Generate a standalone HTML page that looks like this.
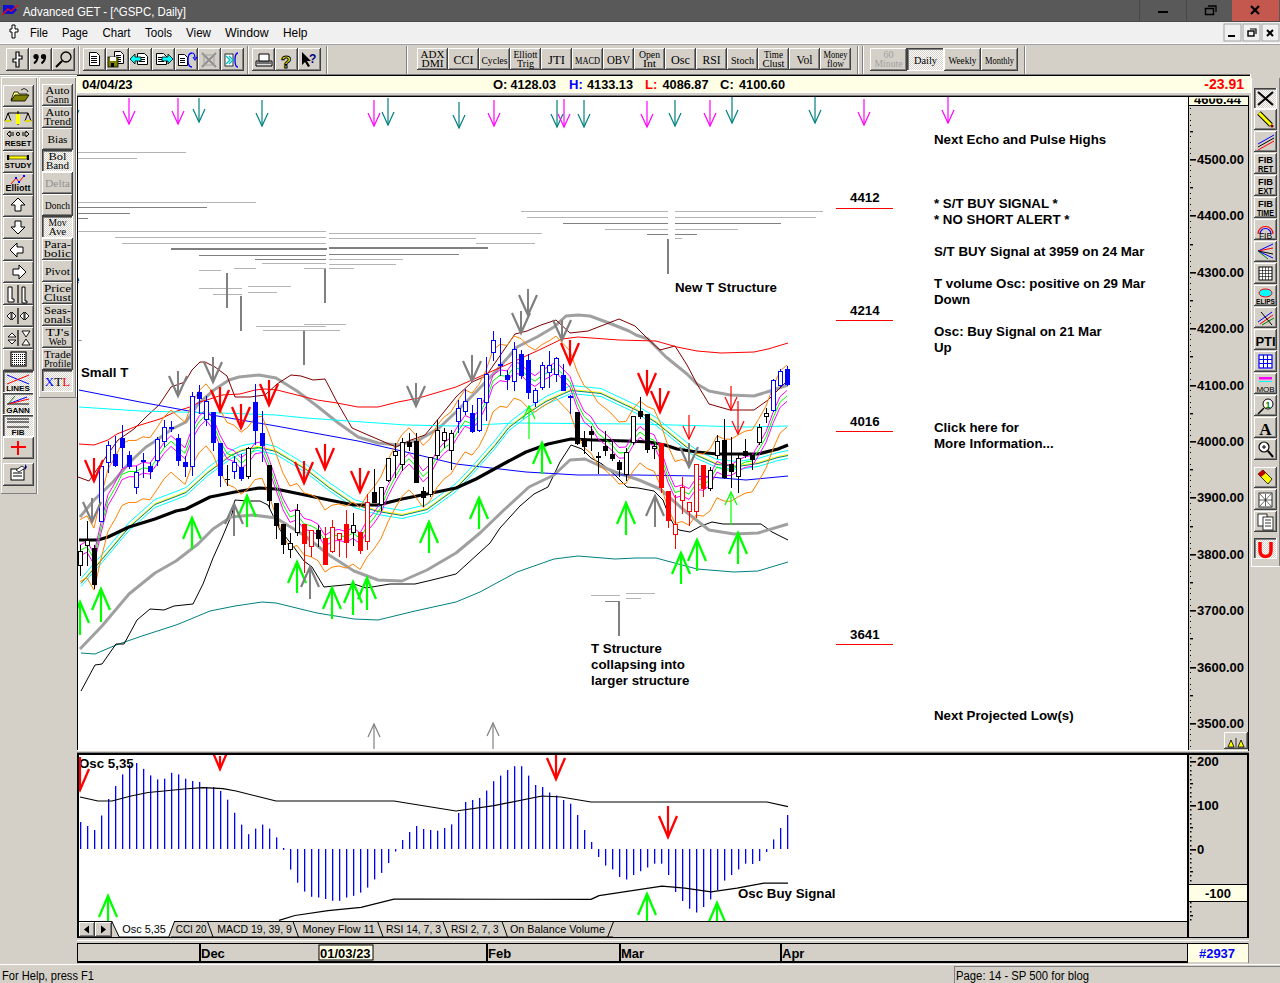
<!DOCTYPE html>
<html><head><meta charset="utf-8"><title>Advanced GET</title>
<style>html,body{margin:0;padding:0;overflow:hidden;background:#d4d0c8} svg{display:block}</style></head>
<body><svg width="1280" height="983" viewBox="0 0 1280 983"><defs>
<pattern id="dith" width="2" height="2" patternUnits="userSpaceOnUse"><rect x="0" y="0" width="1" height="1" fill="#d4d0c8"/><rect x="1" y="1" width="1" height="1" fill="#d4d0c8"/></pattern>
<pattern id="dots" width="2" height="2" patternUnits="userSpaceOnUse"><rect x="0" y="0" width="1" height="1" fill="#000"/></pattern>
<clipPath id="axclip"><rect x="1189" y="98.5" width="59" height="6.5"/></clipPath>
<clipPath id="mainclip"><rect x="78" y="97" width="1110" height="653"/></clipPath>
<clipPath id="oscclip"><rect x="79" y="755" width="1108" height="166"/></clipPath>
</defs>
<rect x="0" y="0" width="1280" height="983" fill="#d4d0c8" /><rect x="0" y="0" width="1280" height="22" fill="#595959" /><rect x="0" y="21" width="1280" height="1" fill="#4a4a4a" /><rect x="1139" y="0" width="1" height="21" fill="#474747" /><rect x="1186" y="0" width="1" height="21" fill="#474747" /><rect x="1232" y="0" width="47" height="21" fill="#c4574e" /><rect x="1158" y="11" width="10" height="2" fill="#000" /><rect x="1205.5" y="8.5" width="8" height="6" fill="none" stroke="#000" stroke-width="1.5"/><path d="M1208 6 H1216 V12" fill="none" stroke="#000" stroke-width="1.3"/><path d="M1251 6 L1259 14 M1259 6 L1251 14" stroke="#000" stroke-width="2.2"/><path d="M3 5 L13 5 L17 10 L13 14 L3 14 Z" fill="#1010d0"/><path d="M2 15 L8 9 L11 11 L18 5" stroke="#e01010" stroke-width="1.4" fill="none"/><text x="23" y="16" font-family="Liberation Sans" font-size="12.5" font-weight="normal" fill="#ffffff" text-anchor="start" textLength="163" lengthAdjust="spacingAndGlyphs">Advanced GET - [^GSPC, Daily]</text><rect x="0" y="22" width="1280" height="21" fill="#f0f0f0" /><rect x="0" y="43" width="1280" height="1" fill="#ffffff" /><rect x="0" y="44" width="1280" height="1" fill="#a0a0a0" /><text x="30" y="37" font-family="Liberation Sans" font-size="12.5" font-weight="normal" fill="#000" text-anchor="start" textLength="18" lengthAdjust="spacingAndGlyphs">File</text><text x="62" y="37" font-family="Liberation Sans" font-size="12.5" font-weight="normal" fill="#000" text-anchor="start" textLength="26" lengthAdjust="spacingAndGlyphs">Page</text><text x="102.5" y="37" font-family="Liberation Sans" font-size="12.5" font-weight="normal" fill="#000" text-anchor="start" textLength="28" lengthAdjust="spacingAndGlyphs">Chart</text><text x="145" y="37" font-family="Liberation Sans" font-size="12.5" font-weight="normal" fill="#000" text-anchor="start" textLength="27" lengthAdjust="spacingAndGlyphs">Tools</text><text x="186" y="37" font-family="Liberation Sans" font-size="12.5" font-weight="normal" fill="#000" text-anchor="start" textLength="25" lengthAdjust="spacingAndGlyphs">View</text><text x="225" y="37" font-family="Liberation Sans" font-size="12.5" font-weight="normal" fill="#000" text-anchor="start" textLength="43.7" lengthAdjust="spacingAndGlyphs">Window</text><text x="283" y="37" font-family="Liberation Sans" font-size="12.5" font-weight="normal" fill="#000" text-anchor="start" textLength="24.5" lengthAdjust="spacingAndGlyphs">Help</text><path d="M12 25 h3 v4 h3 v3 h-3 v6 h-3 v-6 h-2 v-3 h2 z" fill="#fff" stroke="#000" stroke-width="1"/><rect x="1224" y="24" width="17" height="17" fill="#f0f0f0" stroke="#a0a0a0" stroke-width="1"/><rect x="1243" y="24" width="17" height="17" fill="#f0f0f0" stroke="#a0a0a0" stroke-width="1"/><rect x="1262" y="24" width="17" height="17" fill="#f0f0f0" stroke="#a0a0a0" stroke-width="1"/><rect x="1228" y="35" width="7" height="2" fill="#000" /><rect x="1248" y="31" width="6" height="5" fill="none" stroke="#000" stroke-width="1.4"/><path d="M1250 29 H1256 V34" fill="none" stroke="#000" stroke-width="1.2"/><path d="M1267 30 L1273 36 M1273 30 L1267 36" stroke="#000" stroke-width="2"/><rect x="6" y="48" width="23" height="23" fill="#d4d0c8" /><rect x="6" y="48" width="23" height="1" fill="#ffffff" /><rect x="6" y="48" width="1" height="23" fill="#ffffff" /><rect x="6" y="70" width="23" height="1" fill="#404040" /><rect x="28" y="48" width="1" height="23" fill="#404040" /><rect x="7" y="69" width="21" height="1" fill="#808080" /><rect x="27" y="49" width="1" height="21" fill="#808080" /><rect x="29" y="48" width="23" height="23" fill="#d4d0c8" /><rect x="29" y="48" width="23" height="1" fill="#ffffff" /><rect x="29" y="48" width="1" height="23" fill="#ffffff" /><rect x="29" y="70" width="23" height="1" fill="#404040" /><rect x="51" y="48" width="1" height="23" fill="#404040" /><rect x="30" y="69" width="21" height="1" fill="#808080" /><rect x="50" y="49" width="1" height="21" fill="#808080" /><rect x="52" y="48" width="23" height="23" fill="#d4d0c8" /><rect x="52" y="48" width="23" height="1" fill="#ffffff" /><rect x="52" y="48" width="1" height="23" fill="#ffffff" /><rect x="52" y="70" width="23" height="1" fill="#404040" /><rect x="74" y="48" width="1" height="23" fill="#404040" /><rect x="53" y="69" width="21" height="1" fill="#808080" /><rect x="73" y="49" width="1" height="21" fill="#808080" /><rect x="83" y="48" width="23" height="23" fill="#d4d0c8" /><rect x="83" y="48" width="23" height="1" fill="#ffffff" /><rect x="83" y="48" width="1" height="23" fill="#ffffff" /><rect x="83" y="70" width="23" height="1" fill="#404040" /><rect x="105" y="48" width="1" height="23" fill="#404040" /><rect x="84" y="69" width="21" height="1" fill="#808080" /><rect x="104" y="49" width="1" height="21" fill="#808080" /><rect x="106" y="48" width="23" height="23" fill="#d4d0c8" /><rect x="106" y="48" width="23" height="1" fill="#ffffff" /><rect x="106" y="48" width="1" height="23" fill="#ffffff" /><rect x="106" y="70" width="23" height="1" fill="#404040" /><rect x="128" y="48" width="1" height="23" fill="#404040" /><rect x="107" y="69" width="21" height="1" fill="#808080" /><rect x="127" y="49" width="1" height="21" fill="#808080" /><rect x="129" y="48" width="23" height="23" fill="#d4d0c8" /><rect x="129" y="48" width="23" height="1" fill="#ffffff" /><rect x="129" y="48" width="1" height="23" fill="#ffffff" /><rect x="129" y="70" width="23" height="1" fill="#404040" /><rect x="151" y="48" width="1" height="23" fill="#404040" /><rect x="130" y="69" width="21" height="1" fill="#808080" /><rect x="150" y="49" width="1" height="21" fill="#808080" /><rect x="152" y="48" width="23" height="23" fill="#d4d0c8" /><rect x="152" y="48" width="23" height="1" fill="#ffffff" /><rect x="152" y="48" width="1" height="23" fill="#ffffff" /><rect x="152" y="70" width="23" height="1" fill="#404040" /><rect x="174" y="48" width="1" height="23" fill="#404040" /><rect x="153" y="69" width="21" height="1" fill="#808080" /><rect x="173" y="49" width="1" height="21" fill="#808080" /><rect x="175" y="48" width="23" height="23" fill="#d4d0c8" /><rect x="175" y="48" width="23" height="1" fill="#ffffff" /><rect x="175" y="48" width="1" height="23" fill="#ffffff" /><rect x="175" y="70" width="23" height="1" fill="#404040" /><rect x="197" y="48" width="1" height="23" fill="#404040" /><rect x="176" y="69" width="21" height="1" fill="#808080" /><rect x="196" y="49" width="1" height="21" fill="#808080" /><rect x="198" y="48" width="23" height="23" fill="#d4d0c8" /><rect x="198" y="48" width="23" height="1" fill="#ffffff" /><rect x="198" y="48" width="1" height="23" fill="#ffffff" /><rect x="198" y="70" width="23" height="1" fill="#404040" /><rect x="220" y="48" width="1" height="23" fill="#404040" /><rect x="199" y="69" width="21" height="1" fill="#808080" /><rect x="219" y="49" width="1" height="21" fill="#808080" /><rect x="221" y="48" width="23" height="23" fill="#d4d0c8" /><rect x="221" y="48" width="23" height="1" fill="#ffffff" /><rect x="221" y="48" width="1" height="23" fill="#ffffff" /><rect x="221" y="70" width="23" height="1" fill="#404040" /><rect x="243" y="48" width="1" height="23" fill="#404040" /><rect x="222" y="69" width="21" height="1" fill="#808080" /><rect x="242" y="49" width="1" height="21" fill="#808080" /><rect x="252" y="48" width="23" height="23" fill="#d4d0c8" /><rect x="252" y="48" width="23" height="1" fill="#ffffff" /><rect x="252" y="48" width="1" height="23" fill="#ffffff" /><rect x="252" y="70" width="23" height="1" fill="#404040" /><rect x="274" y="48" width="1" height="23" fill="#404040" /><rect x="253" y="69" width="21" height="1" fill="#808080" /><rect x="273" y="49" width="1" height="21" fill="#808080" /><rect x="275" y="48" width="23" height="23" fill="#d4d0c8" /><rect x="275" y="48" width="23" height="1" fill="#ffffff" /><rect x="275" y="48" width="1" height="23" fill="#ffffff" /><rect x="275" y="70" width="23" height="1" fill="#404040" /><rect x="297" y="48" width="1" height="23" fill="#404040" /><rect x="276" y="69" width="21" height="1" fill="#808080" /><rect x="296" y="49" width="1" height="21" fill="#808080" /><rect x="298" y="48" width="23" height="23" fill="#d4d0c8" /><rect x="298" y="48" width="23" height="1" fill="#ffffff" /><rect x="298" y="48" width="1" height="23" fill="#ffffff" /><rect x="298" y="70" width="23" height="1" fill="#404040" /><rect x="320" y="48" width="1" height="23" fill="#404040" /><rect x="299" y="69" width="21" height="1" fill="#808080" /><rect x="319" y="49" width="1" height="21" fill="#808080" /><rect x="78" y="46" width="1" height="28" fill="#808080" /><rect x="79" y="46" width="1" height="28" fill="#ffffff" /><rect x="247" y="46" width="1" height="28" fill="#808080" /><rect x="248" y="46" width="1" height="28" fill="#ffffff" /><rect x="326" y="46" width="1" height="28" fill="#808080" /><rect x="327" y="46" width="1" height="28" fill="#ffffff" /><rect x="406" y="46" width="1" height="28" fill="#808080" /><rect x="407" y="46" width="1" height="28" fill="#ffffff" /><rect x="857" y="46" width="1" height="28" fill="#808080" /><rect x="858" y="46" width="1" height="28" fill="#ffffff" /><rect x="862" y="46" width="1" height="28" fill="#808080" /><rect x="863" y="46" width="1" height="28" fill="#ffffff" /><rect x="1024" y="46" width="1" height="28" fill="#808080" /><rect x="1025" y="46" width="1" height="28" fill="#ffffff" /><path d="M16 52 h3 v4 h3 v3 h-3 v8 h-3 v-5 h-3 v-3 h3 z" fill="#fff" stroke="#000" stroke-width="1.2"/><circle cx="36" cy="56.5" r="2.6" fill="#000"/><path d="M37.5 57 q0 4 -3.5 6.5" fill="none" stroke="#000" stroke-width="2"/><circle cx="43.5" cy="56.5" r="2.6" fill="#000"/><path d="M45 57 q0 4 -3.5 6.5" fill="none" stroke="#000" stroke-width="2"/><circle cx="66" cy="57" r="5" fill="none" stroke="#000" stroke-width="1.3"/><line x1="62" y1="61" x2="56" y2="67" stroke="#000" stroke-width="2"/><path d="M89.5 52.5 h7 l3 3 v10 h-10 z" fill="#fff" stroke="#000" stroke-width="1"/><rect x="91.0" y="56.0" width="6" height="1" fill="#000"/><rect x="91.0" y="58.0" width="6" height="1" fill="#000"/><rect x="91.0" y="60.0" width="6" height="1" fill="#000"/><rect x="91.0" y="62.0" width="6" height="1" fill="#000"/><path d="M114.5 51.5 h6 l3 3 v9 h-9 z" fill="#fff" stroke="#000" stroke-width="1"/><rect x="116.0" y="55.0" width="5" height="1" fill="#000"/><rect x="116.0" y="57.0" width="5" height="1" fill="#000"/><rect x="116.0" y="59.0" width="5" height="1" fill="#000"/><rect x="116.0" y="61.0" width="5" height="1" fill="#000"/><rect x="108" y="57" width="10" height="10" fill="#808000" stroke="#000" stroke-width="0.8"/><rect x="110" y="57" width="6" height="4" fill="#fff"/><rect x="111" y="63" width="3" height="4" fill="#000"/><path d="M137.5 53.5 h7 l3 3 v8 h-10 z" fill="#fff" stroke="#000" stroke-width="1"/><rect x="139.0" y="57.0" width="6" height="1" fill="#000"/><rect x="139.0" y="59.0" width="6" height="1" fill="#000"/><rect x="139.0" y="61.0" width="6" height="1" fill="#000"/><path d="M130 59 l5 -5 v3 h6 v4 h-6 v3 z" fill="#00ffff" stroke="#000" stroke-width="0.8"/><path d="M156.5 53.5 h7 l3 3 v8 h-10 z" fill="#fff" stroke="#000" stroke-width="1"/><rect x="158.0" y="57.0" width="6" height="1" fill="#000"/><rect x="158.0" y="59.0" width="6" height="1" fill="#000"/><rect x="158.0" y="61.0" width="6" height="1" fill="#000"/><path d="M173 59 l-5 -5 v3 h-6 v4 h6 v3 z" fill="#00ffff" stroke="#000" stroke-width="0.8"/><path d="M178.5 54.5 h6 l3 3 v8 h-9 z" fill="#fff" stroke="#000" stroke-width="1"/><rect x="180.0" y="58.0" width="5" height="1" fill="#000"/><rect x="180.0" y="60.0" width="5" height="1" fill="#000"/><rect x="180.0" y="62.0" width="5" height="1" fill="#000"/><path d="M192 53 q-4 0 -4 7 q0 7 4 7" fill="none" stroke="#0000ff" stroke-width="1.3"/><path d="M192 53 q3 0 3 5 M193 57 l2 3 l2 -3" fill="none" stroke="#0000ff" stroke-width="1.2"/><path d="M202 53 L216 67 M216 53 L202 67" stroke="#909090" stroke-width="2"/><rect x="204" y="55" width="10" height="10" fill="none" stroke="#a0a0a0"/><rect x="225" y="54" width="8" height="12" fill="#fff" stroke="#000" stroke-width="0.8"/><path d="M226 56 l4 4 l-4 4 M229 56 l4 4 l-4 4" fill="none" stroke="#00c0c0" stroke-width="1.4"/><path d="M238 53 q-3 0 -3 7 q0 7 3 7" fill="none" stroke="#0000ff" stroke-width="1.3"/><path d="M256 61 h16 v5 h-16 z" fill="#e0e0e0" stroke="#000" stroke-width="1"/><path d="M259 54 h10 v7 h-10 z" fill="#fff" stroke="#000" stroke-width="1"/><line x1="257" y1="63" x2="271" y2="63" stroke="#000"/><text x="281" y="68" font-family="Liberation Sans" font-size="17" font-weight="bold" fill="#ffff00" text-anchor="start" stroke="#000" stroke-width="1">?</text><path d="M302 52 v13 l3 -3 l3 5 l2 -1 l-3 -5 h4 z" fill="#000"/><text x="309" y="63" font-family="Liberation Sans" font-size="12" font-weight="bold" fill="#000080" text-anchor="start" >?</text><rect x="417" y="48" width="31" height="22" fill="#d4d0c8" /><rect x="417" y="48" width="31" height="1" fill="#ffffff" /><rect x="417" y="48" width="1" height="22" fill="#ffffff" /><rect x="417" y="69" width="31" height="1" fill="#404040" /><rect x="447" y="48" width="1" height="22" fill="#404040" /><rect x="418" y="68" width="29" height="1" fill="#808080" /><rect x="446" y="49" width="1" height="20" fill="#808080" /><text x="432.5" y="58" font-family="Liberation Serif" font-size="10" font-weight="normal" fill="#000" text-anchor="middle" textLength="24" lengthAdjust="spacingAndGlyphs">ADX</text><text x="432.5" y="67" font-family="Liberation Serif" font-size="10" font-weight="normal" fill="#000" text-anchor="middle" textLength="22" lengthAdjust="spacingAndGlyphs">DMI</text><rect x="448" y="48" width="31" height="22" fill="#d4d0c8" /><rect x="448" y="48" width="31" height="1" fill="#ffffff" /><rect x="448" y="48" width="1" height="22" fill="#ffffff" /><rect x="448" y="69" width="31" height="1" fill="#404040" /><rect x="478" y="48" width="1" height="22" fill="#404040" /><rect x="449" y="68" width="29" height="1" fill="#808080" /><rect x="477" y="49" width="1" height="20" fill="#808080" /><text x="463.5" y="64" font-family="Liberation Serif" font-size="13" font-weight="normal" fill="#000" text-anchor="middle" textLength="20" lengthAdjust="spacingAndGlyphs">CCI</text><rect x="479" y="48" width="31" height="22" fill="#d4d0c8" /><rect x="479" y="48" width="31" height="1" fill="#ffffff" /><rect x="479" y="48" width="1" height="22" fill="#ffffff" /><rect x="479" y="69" width="31" height="1" fill="#404040" /><rect x="509" y="48" width="1" height="22" fill="#404040" /><rect x="480" y="68" width="29" height="1" fill="#808080" /><rect x="508" y="49" width="1" height="20" fill="#808080" /><text x="494.5" y="64" font-family="Liberation Serif" font-size="11" font-weight="normal" fill="#000" text-anchor="middle" textLength="26" lengthAdjust="spacingAndGlyphs">Cycles</text><rect x="510" y="48" width="31" height="22" fill="#d4d0c8" /><rect x="510" y="48" width="31" height="1" fill="#ffffff" /><rect x="510" y="48" width="1" height="22" fill="#ffffff" /><rect x="510" y="69" width="31" height="1" fill="#404040" /><rect x="540" y="48" width="1" height="22" fill="#404040" /><rect x="511" y="68" width="29" height="1" fill="#808080" /><rect x="539" y="49" width="1" height="20" fill="#808080" /><text x="525.5" y="58" font-family="Liberation Serif" font-size="10" font-weight="normal" fill="#000" text-anchor="middle" textLength="24" lengthAdjust="spacingAndGlyphs">Elliott</text><text x="525.5" y="67" font-family="Liberation Serif" font-size="10" font-weight="normal" fill="#000" text-anchor="middle" textLength="17" lengthAdjust="spacingAndGlyphs">Trig</text><rect x="541" y="48" width="31" height="22" fill="#d4d0c8" /><rect x="541" y="48" width="31" height="1" fill="#ffffff" /><rect x="541" y="48" width="1" height="22" fill="#ffffff" /><rect x="541" y="69" width="31" height="1" fill="#404040" /><rect x="571" y="48" width="1" height="22" fill="#404040" /><rect x="542" y="68" width="29" height="1" fill="#808080" /><rect x="570" y="49" width="1" height="20" fill="#808080" /><text x="556.5" y="64" font-family="Liberation Serif" font-size="13" font-weight="normal" fill="#000" text-anchor="middle" textLength="17" lengthAdjust="spacingAndGlyphs">JTI</text><rect x="572" y="48" width="31" height="22" fill="#d4d0c8" /><rect x="572" y="48" width="31" height="1" fill="#ffffff" /><rect x="572" y="48" width="1" height="22" fill="#ffffff" /><rect x="572" y="69" width="31" height="1" fill="#404040" /><rect x="602" y="48" width="1" height="22" fill="#404040" /><rect x="573" y="68" width="29" height="1" fill="#808080" /><rect x="601" y="49" width="1" height="20" fill="#808080" /><text x="587.5" y="64" font-family="Liberation Serif" font-size="11" font-weight="normal" fill="#000" text-anchor="middle" textLength="25" lengthAdjust="spacingAndGlyphs">MACD</text><rect x="603" y="48" width="31" height="22" fill="#d4d0c8" /><rect x="603" y="48" width="31" height="1" fill="#ffffff" /><rect x="603" y="48" width="1" height="22" fill="#ffffff" /><rect x="603" y="69" width="31" height="1" fill="#404040" /><rect x="633" y="48" width="1" height="22" fill="#404040" /><rect x="604" y="68" width="29" height="1" fill="#808080" /><rect x="632" y="49" width="1" height="20" fill="#808080" /><text x="618.5" y="64" font-family="Liberation Serif" font-size="13" font-weight="normal" fill="#000" text-anchor="middle" textLength="23" lengthAdjust="spacingAndGlyphs">OBV</text><rect x="634" y="48" width="31" height="22" fill="#d4d0c8" /><rect x="634" y="48" width="31" height="1" fill="#ffffff" /><rect x="634" y="48" width="1" height="22" fill="#ffffff" /><rect x="634" y="69" width="31" height="1" fill="#404040" /><rect x="664" y="48" width="1" height="22" fill="#404040" /><rect x="635" y="68" width="29" height="1" fill="#808080" /><rect x="663" y="49" width="1" height="20" fill="#808080" /><text x="649.5" y="58" font-family="Liberation Serif" font-size="10" font-weight="normal" fill="#000" text-anchor="middle" textLength="21" lengthAdjust="spacingAndGlyphs">Open</text><text x="649.5" y="67" font-family="Liberation Serif" font-size="10" font-weight="normal" fill="#000" text-anchor="middle" textLength="13" lengthAdjust="spacingAndGlyphs">Int</text><rect x="665" y="48" width="31" height="22" fill="#d4d0c8" /><rect x="665" y="48" width="31" height="1" fill="#ffffff" /><rect x="665" y="48" width="1" height="22" fill="#ffffff" /><rect x="665" y="69" width="31" height="1" fill="#404040" /><rect x="695" y="48" width="1" height="22" fill="#404040" /><rect x="666" y="68" width="29" height="1" fill="#808080" /><rect x="694" y="49" width="1" height="20" fill="#808080" /><text x="680.5" y="64" font-family="Liberation Serif" font-size="13" font-weight="normal" fill="#000" text-anchor="middle" textLength="19" lengthAdjust="spacingAndGlyphs">Osc</text><rect x="696" y="48" width="31" height="22" fill="#d4d0c8" /><rect x="696" y="48" width="31" height="1" fill="#ffffff" /><rect x="696" y="48" width="1" height="22" fill="#ffffff" /><rect x="696" y="69" width="31" height="1" fill="#404040" /><rect x="726" y="48" width="1" height="22" fill="#404040" /><rect x="697" y="68" width="29" height="1" fill="#808080" /><rect x="725" y="49" width="1" height="20" fill="#808080" /><text x="711.5" y="64" font-family="Liberation Serif" font-size="13" font-weight="normal" fill="#000" text-anchor="middle" textLength="18" lengthAdjust="spacingAndGlyphs">RSI</text><rect x="727" y="48" width="31" height="22" fill="#d4d0c8" /><rect x="727" y="48" width="31" height="1" fill="#ffffff" /><rect x="727" y="48" width="1" height="22" fill="#ffffff" /><rect x="727" y="69" width="31" height="1" fill="#404040" /><rect x="757" y="48" width="1" height="22" fill="#404040" /><rect x="728" y="68" width="29" height="1" fill="#808080" /><rect x="756" y="49" width="1" height="20" fill="#808080" /><text x="742.5" y="64" font-family="Liberation Serif" font-size="11" font-weight="normal" fill="#000" text-anchor="middle" textLength="23" lengthAdjust="spacingAndGlyphs">Stoch</text><rect x="758" y="48" width="31" height="22" fill="#d4d0c8" /><rect x="758" y="48" width="31" height="1" fill="#ffffff" /><rect x="758" y="48" width="1" height="22" fill="#ffffff" /><rect x="758" y="69" width="31" height="1" fill="#404040" /><rect x="788" y="48" width="1" height="22" fill="#404040" /><rect x="759" y="68" width="29" height="1" fill="#808080" /><rect x="787" y="49" width="1" height="20" fill="#808080" /><text x="773.5" y="58" font-family="Liberation Serif" font-size="10" font-weight="normal" fill="#000" text-anchor="middle" textLength="19" lengthAdjust="spacingAndGlyphs">Time</text><text x="773.5" y="67" font-family="Liberation Serif" font-size="10" font-weight="normal" fill="#000" text-anchor="middle" textLength="22" lengthAdjust="spacingAndGlyphs">Clust</text><rect x="789" y="48" width="31" height="22" fill="#d4d0c8" /><rect x="789" y="48" width="31" height="1" fill="#ffffff" /><rect x="789" y="48" width="1" height="22" fill="#ffffff" /><rect x="789" y="69" width="31" height="1" fill="#404040" /><rect x="819" y="48" width="1" height="22" fill="#404040" /><rect x="790" y="68" width="29" height="1" fill="#808080" /><rect x="818" y="49" width="1" height="20" fill="#808080" /><text x="804.5" y="64" font-family="Liberation Serif" font-size="13" font-weight="normal" fill="#000" text-anchor="middle" textLength="16" lengthAdjust="spacingAndGlyphs">Vol</text><rect x="820" y="48" width="31" height="22" fill="#d4d0c8" /><rect x="820" y="48" width="31" height="1" fill="#ffffff" /><rect x="820" y="48" width="1" height="22" fill="#ffffff" /><rect x="820" y="69" width="31" height="1" fill="#404040" /><rect x="850" y="48" width="1" height="22" fill="#404040" /><rect x="821" y="68" width="29" height="1" fill="#808080" /><rect x="849" y="49" width="1" height="20" fill="#808080" /><text x="835.5" y="58" font-family="Liberation Serif" font-size="10" font-weight="normal" fill="#000" text-anchor="middle" textLength="24" lengthAdjust="spacingAndGlyphs">Money</text><text x="835.5" y="67" font-family="Liberation Serif" font-size="10" font-weight="normal" fill="#000" text-anchor="middle" textLength="17" lengthAdjust="spacingAndGlyphs">flow</text><rect x="870" y="48" width="37" height="23" fill="#d4d0c8" /><rect x="870" y="48" width="37" height="1" fill="#ffffff" /><rect x="870" y="48" width="1" height="23" fill="#ffffff" /><rect x="870" y="70" width="37" height="1" fill="#404040" /><rect x="906" y="48" width="1" height="23" fill="#404040" /><rect x="871" y="69" width="35" height="1" fill="#808080" /><rect x="905" y="49" width="1" height="21" fill="#808080" /><text x="888.5" y="58" font-family="Liberation Serif" font-size="10" font-weight="normal" fill="#a0a0a0" text-anchor="middle" >60</text><text x="888.5" y="67" font-family="Liberation Serif" font-size="10" font-weight="normal" fill="#a0a0a0" text-anchor="middle" textLength="28" lengthAdjust="spacingAndGlyphs">Minute</text><rect x="907" y="48" width="37" height="23" fill="#ffffff" /><rect x="907" y="48" width="37" height="23" fill="url(#dith)" /><rect x="907" y="48" width="37" height="1" fill="#404040" /><rect x="907" y="48" width="1" height="23" fill="#404040" /><rect x="908" y="49" width="35" height="1" fill="#808080" /><rect x="908" y="49" width="1" height="21" fill="#808080" /><rect x="907" y="70" width="37" height="1" fill="#ffffff" /><rect x="943" y="48" width="1" height="23" fill="#ffffff" /><text x="925.5" y="64" font-family="Liberation Serif" font-size="11" font-weight="normal" fill="#000" text-anchor="middle" textLength="23" lengthAdjust="spacingAndGlyphs">Daily</text><rect x="944" y="48" width="37" height="23" fill="#d4d0c8" /><rect x="944" y="48" width="37" height="1" fill="#ffffff" /><rect x="944" y="48" width="1" height="23" fill="#ffffff" /><rect x="944" y="70" width="37" height="1" fill="#404040" /><rect x="980" y="48" width="1" height="23" fill="#404040" /><rect x="945" y="69" width="35" height="1" fill="#808080" /><rect x="979" y="49" width="1" height="21" fill="#808080" /><text x="962.5" y="64" font-family="Liberation Serif" font-size="11" font-weight="normal" fill="#000" text-anchor="middle" textLength="28" lengthAdjust="spacingAndGlyphs">Weekly</text><rect x="981" y="48" width="37" height="23" fill="#d4d0c8" /><rect x="981" y="48" width="37" height="1" fill="#ffffff" /><rect x="981" y="48" width="1" height="23" fill="#ffffff" /><rect x="981" y="70" width="37" height="1" fill="#404040" /><rect x="1017" y="48" width="1" height="23" fill="#404040" /><rect x="982" y="69" width="35" height="1" fill="#808080" /><rect x="1016" y="49" width="1" height="21" fill="#808080" /><text x="999.5" y="64" font-family="Liberation Serif" font-size="10" font-weight="normal" fill="#000" text-anchor="middle" textLength="29" lengthAdjust="spacingAndGlyphs">Monthly</text><rect x="0" y="74" width="77" height="1" fill="#808080" /><rect x="0" y="75" width="77" height="1" fill="#ffffff" /><rect x="1" y="77" width="1" height="416" fill="#ffffff" /><rect x="36" y="77" width="1" height="416" fill="#808080" /><rect x="1" y="77" width="36" height="1" fill="#ffffff" /><rect x="1" y="493" width="36" height="1" fill="#808080" /><rect x="37" y="77" width="1" height="417" fill="#ffffff" /><rect x="39" y="77" width="1" height="321" fill="#ffffff" /><rect x="75" y="77" width="1" height="321" fill="#808080" /><rect x="39" y="77" width="37" height="1" fill="#ffffff" /><rect x="39" y="397" width="37" height="1" fill="#808080" /><rect x="76" y="77" width="1" height="320" fill="#ffffff" /><rect x="3" y="85" width="31" height="22" fill="#d4d0c8" /><rect x="3" y="85" width="31" height="1" fill="#ffffff" /><rect x="3" y="85" width="1" height="22" fill="#ffffff" /><rect x="3" y="106" width="31" height="1" fill="#404040" /><rect x="33" y="85" width="1" height="22" fill="#404040" /><rect x="4" y="105" width="29" height="1" fill="#808080" /><rect x="32" y="86" width="1" height="20" fill="#808080" /><rect x="3" y="107" width="31" height="22" fill="#d4d0c8" /><rect x="3" y="107" width="31" height="1" fill="#ffffff" /><rect x="3" y="107" width="1" height="22" fill="#ffffff" /><rect x="3" y="128" width="31" height="1" fill="#404040" /><rect x="33" y="107" width="1" height="22" fill="#404040" /><rect x="4" y="127" width="29" height="1" fill="#808080" /><rect x="32" y="108" width="1" height="20" fill="#808080" /><rect x="3" y="129" width="31" height="22" fill="#d4d0c8" /><rect x="3" y="129" width="31" height="1" fill="#ffffff" /><rect x="3" y="129" width="1" height="22" fill="#ffffff" /><rect x="3" y="150" width="31" height="1" fill="#404040" /><rect x="33" y="129" width="1" height="22" fill="#404040" /><rect x="4" y="149" width="29" height="1" fill="#808080" /><rect x="32" y="130" width="1" height="20" fill="#808080" /><rect x="3" y="151" width="31" height="22" fill="#d4d0c8" /><rect x="3" y="151" width="31" height="1" fill="#ffffff" /><rect x="3" y="151" width="1" height="22" fill="#ffffff" /><rect x="3" y="172" width="31" height="1" fill="#404040" /><rect x="33" y="151" width="1" height="22" fill="#404040" /><rect x="4" y="171" width="29" height="1" fill="#808080" /><rect x="32" y="152" width="1" height="20" fill="#808080" /><rect x="3" y="173" width="31" height="22" fill="#d4d0c8" /><rect x="3" y="173" width="31" height="1" fill="#ffffff" /><rect x="3" y="173" width="1" height="22" fill="#ffffff" /><rect x="3" y="194" width="31" height="1" fill="#404040" /><rect x="33" y="173" width="1" height="22" fill="#404040" /><rect x="4" y="193" width="29" height="1" fill="#808080" /><rect x="32" y="174" width="1" height="20" fill="#808080" /><rect x="3" y="195" width="31" height="22" fill="#d4d0c8" /><rect x="3" y="195" width="31" height="1" fill="#ffffff" /><rect x="3" y="195" width="1" height="22" fill="#ffffff" /><rect x="3" y="216" width="31" height="1" fill="#404040" /><rect x="33" y="195" width="1" height="22" fill="#404040" /><rect x="4" y="215" width="29" height="1" fill="#808080" /><rect x="32" y="196" width="1" height="20" fill="#808080" /><rect x="3" y="217" width="31" height="22" fill="#d4d0c8" /><rect x="3" y="217" width="31" height="1" fill="#ffffff" /><rect x="3" y="217" width="1" height="22" fill="#ffffff" /><rect x="3" y="238" width="31" height="1" fill="#404040" /><rect x="33" y="217" width="1" height="22" fill="#404040" /><rect x="4" y="237" width="29" height="1" fill="#808080" /><rect x="32" y="218" width="1" height="20" fill="#808080" /><rect x="3" y="239" width="31" height="22" fill="#d4d0c8" /><rect x="3" y="239" width="31" height="1" fill="#ffffff" /><rect x="3" y="239" width="1" height="22" fill="#ffffff" /><rect x="3" y="260" width="31" height="1" fill="#404040" /><rect x="33" y="239" width="1" height="22" fill="#404040" /><rect x="4" y="259" width="29" height="1" fill="#808080" /><rect x="32" y="240" width="1" height="20" fill="#808080" /><rect x="3" y="261" width="31" height="22" fill="#d4d0c8" /><rect x="3" y="261" width="31" height="1" fill="#ffffff" /><rect x="3" y="261" width="1" height="22" fill="#ffffff" /><rect x="3" y="282" width="31" height="1" fill="#404040" /><rect x="33" y="261" width="1" height="22" fill="#404040" /><rect x="4" y="281" width="29" height="1" fill="#808080" /><rect x="32" y="262" width="1" height="20" fill="#808080" /><rect x="3" y="283" width="31" height="22" fill="#d4d0c8" /><rect x="3" y="283" width="31" height="1" fill="#ffffff" /><rect x="3" y="283" width="1" height="22" fill="#ffffff" /><rect x="3" y="304" width="31" height="1" fill="#404040" /><rect x="33" y="283" width="1" height="22" fill="#404040" /><rect x="4" y="303" width="29" height="1" fill="#808080" /><rect x="32" y="284" width="1" height="20" fill="#808080" /><rect x="3" y="305" width="31" height="22" fill="#d4d0c8" /><rect x="3" y="305" width="31" height="1" fill="#ffffff" /><rect x="3" y="305" width="1" height="22" fill="#ffffff" /><rect x="3" y="326" width="31" height="1" fill="#404040" /><rect x="33" y="305" width="1" height="22" fill="#404040" /><rect x="4" y="325" width="29" height="1" fill="#808080" /><rect x="32" y="306" width="1" height="20" fill="#808080" /><rect x="3" y="327" width="31" height="22" fill="#d4d0c8" /><rect x="3" y="327" width="31" height="1" fill="#ffffff" /><rect x="3" y="327" width="1" height="22" fill="#ffffff" /><rect x="3" y="348" width="31" height="1" fill="#404040" /><rect x="33" y="327" width="1" height="22" fill="#404040" /><rect x="4" y="347" width="29" height="1" fill="#808080" /><rect x="32" y="328" width="1" height="20" fill="#808080" /><rect x="3" y="349" width="31" height="22" fill="#d4d0c8" /><rect x="3" y="349" width="31" height="1" fill="#ffffff" /><rect x="3" y="349" width="1" height="22" fill="#ffffff" /><rect x="3" y="370" width="31" height="1" fill="#404040" /><rect x="33" y="349" width="1" height="22" fill="#404040" /><rect x="4" y="369" width="29" height="1" fill="#808080" /><rect x="32" y="350" width="1" height="20" fill="#808080" /><rect x="3" y="371" width="31" height="22" fill="#ffffff" /><rect x="3" y="371" width="31" height="22" fill="url(#dith)" /><rect x="3" y="371" width="31" height="1" fill="#404040" /><rect x="3" y="371" width="1" height="22" fill="#404040" /><rect x="4" y="372" width="29" height="1" fill="#808080" /><rect x="4" y="372" width="1" height="20" fill="#808080" /><rect x="3" y="392" width="31" height="1" fill="#ffffff" /><rect x="33" y="371" width="1" height="22" fill="#ffffff" /><rect x="3" y="393" width="31" height="22" fill="#ffffff" /><rect x="3" y="393" width="31" height="22" fill="url(#dith)" /><rect x="3" y="393" width="31" height="1" fill="#404040" /><rect x="3" y="393" width="1" height="22" fill="#404040" /><rect x="4" y="394" width="29" height="1" fill="#808080" /><rect x="4" y="394" width="1" height="20" fill="#808080" /><rect x="3" y="414" width="31" height="1" fill="#ffffff" /><rect x="33" y="393" width="1" height="22" fill="#ffffff" /><rect x="3" y="415" width="31" height="22" fill="#ffffff" /><rect x="3" y="415" width="31" height="22" fill="url(#dith)" /><rect x="3" y="415" width="31" height="1" fill="#404040" /><rect x="3" y="415" width="1" height="22" fill="#404040" /><rect x="4" y="416" width="29" height="1" fill="#808080" /><rect x="4" y="416" width="1" height="20" fill="#808080" /><rect x="3" y="436" width="31" height="1" fill="#ffffff" /><rect x="33" y="415" width="1" height="22" fill="#ffffff" /><rect x="3" y="437" width="31" height="22" fill="#d4d0c8" /><rect x="3" y="437" width="31" height="1" fill="#ffffff" /><rect x="3" y="437" width="1" height="22" fill="#ffffff" /><rect x="3" y="458" width="31" height="1" fill="#404040" /><rect x="33" y="437" width="1" height="22" fill="#404040" /><rect x="4" y="457" width="29" height="1" fill="#808080" /><rect x="32" y="438" width="1" height="20" fill="#808080" /><rect x="3" y="463" width="31" height="23" fill="#d4d0c8" /><rect x="3" y="463" width="31" height="1" fill="#ffffff" /><rect x="3" y="463" width="1" height="23" fill="#ffffff" /><rect x="3" y="485" width="31" height="1" fill="#404040" /><rect x="33" y="463" width="1" height="23" fill="#404040" /><rect x="4" y="484" width="29" height="1" fill="#808080" /><rect x="32" y="464" width="1" height="21" fill="#808080" /><rect x="42" y="84" width="31" height="22" fill="#d4d0c8" /><rect x="42" y="84" width="31" height="1" fill="#ffffff" /><rect x="42" y="84" width="1" height="22" fill="#ffffff" /><rect x="42" y="105" width="31" height="1" fill="#404040" /><rect x="72" y="84" width="1" height="22" fill="#404040" /><rect x="43" y="104" width="29" height="1" fill="#808080" /><rect x="71" y="85" width="1" height="20" fill="#808080" /><text x="57.5" y="94" font-family="Liberation Serif" font-size="10.5" font-weight="normal" fill="#000" text-anchor="middle" textLength="24.0" lengthAdjust="spacingAndGlyphs">Auto</text><text x="57.5" y="103" font-family="Liberation Serif" font-size="10.5" font-weight="normal" fill="#000" text-anchor="middle" textLength="23.2" lengthAdjust="spacingAndGlyphs">Gann</text><rect x="42" y="106" width="31" height="22" fill="#d4d0c8" /><rect x="42" y="106" width="31" height="1" fill="#ffffff" /><rect x="42" y="106" width="1" height="22" fill="#ffffff" /><rect x="42" y="127" width="31" height="1" fill="#404040" /><rect x="72" y="106" width="1" height="22" fill="#404040" /><rect x="43" y="126" width="29" height="1" fill="#808080" /><rect x="71" y="107" width="1" height="20" fill="#808080" /><text x="57.5" y="116" font-family="Liberation Serif" font-size="10.5" font-weight="normal" fill="#000" text-anchor="middle" textLength="24.0" lengthAdjust="spacingAndGlyphs">Auto</text><text x="57.5" y="125" font-family="Liberation Serif" font-size="10.5" font-weight="normal" fill="#000" text-anchor="middle" textLength="27" lengthAdjust="spacingAndGlyphs">Trend</text><rect x="42" y="128" width="31" height="22" fill="#d4d0c8" /><rect x="42" y="128" width="31" height="1" fill="#ffffff" /><rect x="42" y="128" width="1" height="22" fill="#ffffff" /><rect x="42" y="149" width="31" height="1" fill="#404040" /><rect x="72" y="128" width="1" height="22" fill="#404040" /><rect x="43" y="148" width="29" height="1" fill="#808080" /><rect x="71" y="129" width="1" height="20" fill="#808080" /><text x="57.5" y="143" font-family="Liberation Serif" font-size="11" font-weight="normal" fill="#000" text-anchor="middle" textLength="20.0" lengthAdjust="spacingAndGlyphs">Bias</text><rect x="42" y="150" width="31" height="22" fill="#ffffff" /><rect x="42" y="150" width="31" height="22" fill="url(#dith)" /><rect x="42" y="150" width="31" height="1" fill="#404040" /><rect x="42" y="150" width="1" height="22" fill="#404040" /><rect x="43" y="151" width="29" height="1" fill="#808080" /><rect x="43" y="151" width="1" height="20" fill="#808080" /><rect x="42" y="171" width="31" height="1" fill="#ffffff" /><rect x="72" y="150" width="1" height="22" fill="#ffffff" /><text x="57.5" y="160" font-family="Liberation Serif" font-size="10.5" font-weight="normal" fill="#000" text-anchor="middle" textLength="18.0" lengthAdjust="spacingAndGlyphs">Bol</text><text x="57.5" y="169" font-family="Liberation Serif" font-size="10.5" font-weight="normal" fill="#000" text-anchor="middle" textLength="23.2" lengthAdjust="spacingAndGlyphs">Band</text><rect x="42" y="172" width="31" height="22" fill="#d4d0c8" /><rect x="42" y="172" width="31" height="1" fill="#ffffff" /><rect x="42" y="172" width="1" height="22" fill="#ffffff" /><rect x="42" y="193" width="31" height="1" fill="#404040" /><rect x="72" y="172" width="1" height="22" fill="#404040" /><rect x="43" y="192" width="29" height="1" fill="#808080" /><rect x="71" y="173" width="1" height="20" fill="#808080" /><text x="57.5" y="187" font-family="Liberation Serif" font-size="11" font-weight="normal" fill="#909090" text-anchor="middle" textLength="25" lengthAdjust="spacingAndGlyphs">Delta</text><rect x="42" y="194" width="31" height="22" fill="#d4d0c8" /><rect x="42" y="194" width="31" height="1" fill="#ffffff" /><rect x="42" y="194" width="1" height="22" fill="#ffffff" /><rect x="42" y="215" width="31" height="1" fill="#404040" /><rect x="72" y="194" width="1" height="22" fill="#404040" /><rect x="43" y="214" width="29" height="1" fill="#808080" /><rect x="71" y="195" width="1" height="20" fill="#808080" /><text x="57.5" y="209" font-family="Liberation Serif" font-size="11" font-weight="normal" fill="#000" text-anchor="middle" textLength="25" lengthAdjust="spacingAndGlyphs">Donch</text><rect x="42" y="216" width="31" height="22" fill="#ffffff" /><rect x="42" y="216" width="31" height="22" fill="url(#dith)" /><rect x="42" y="216" width="31" height="1" fill="#404040" /><rect x="42" y="216" width="1" height="22" fill="#404040" /><rect x="43" y="217" width="29" height="1" fill="#808080" /><rect x="43" y="217" width="1" height="20" fill="#808080" /><rect x="42" y="237" width="31" height="1" fill="#ffffff" /><rect x="72" y="216" width="1" height="22" fill="#ffffff" /><text x="57.5" y="226" font-family="Liberation Serif" font-size="10.5" font-weight="normal" fill="#000" text-anchor="middle" textLength="18.0" lengthAdjust="spacingAndGlyphs">Mov</text><text x="57.5" y="235" font-family="Liberation Serif" font-size="10.5" font-weight="normal" fill="#000" text-anchor="middle" textLength="17.4" lengthAdjust="spacingAndGlyphs">Ave</text><rect x="42" y="238" width="31" height="22" fill="#d4d0c8" /><rect x="42" y="238" width="31" height="1" fill="#ffffff" /><rect x="42" y="238" width="1" height="22" fill="#ffffff" /><rect x="42" y="259" width="31" height="1" fill="#404040" /><rect x="72" y="238" width="1" height="22" fill="#404040" /><rect x="43" y="258" width="29" height="1" fill="#808080" /><rect x="71" y="239" width="1" height="20" fill="#808080" /><text x="57.5" y="248" font-family="Liberation Serif" font-size="10.5" font-weight="normal" fill="#000" text-anchor="middle" textLength="27" lengthAdjust="spacingAndGlyphs">Para-</text><text x="57.5" y="257" font-family="Liberation Serif" font-size="10.5" font-weight="normal" fill="#000" text-anchor="middle" textLength="27" lengthAdjust="spacingAndGlyphs">bolic</text><rect x="42" y="260" width="31" height="22" fill="#d4d0c8" /><rect x="42" y="260" width="31" height="1" fill="#ffffff" /><rect x="42" y="260" width="1" height="22" fill="#ffffff" /><rect x="42" y="281" width="31" height="1" fill="#404040" /><rect x="72" y="260" width="1" height="22" fill="#404040" /><rect x="43" y="280" width="29" height="1" fill="#808080" /><rect x="71" y="261" width="1" height="20" fill="#808080" /><text x="57.5" y="275" font-family="Liberation Serif" font-size="11" font-weight="normal" fill="#000" text-anchor="middle" textLength="25" lengthAdjust="spacingAndGlyphs">Pivot</text><rect x="42" y="282" width="31" height="22" fill="#d4d0c8" /><rect x="42" y="282" width="31" height="1" fill="#ffffff" /><rect x="42" y="282" width="1" height="22" fill="#ffffff" /><rect x="42" y="303" width="31" height="1" fill="#404040" /><rect x="72" y="282" width="1" height="22" fill="#404040" /><rect x="43" y="302" width="29" height="1" fill="#808080" /><rect x="71" y="283" width="1" height="20" fill="#808080" /><text x="57.5" y="292" font-family="Liberation Serif" font-size="10.5" font-weight="normal" fill="#000" text-anchor="middle" textLength="27" lengthAdjust="spacingAndGlyphs">Price</text><text x="57.5" y="301" font-family="Liberation Serif" font-size="10.5" font-weight="normal" fill="#000" text-anchor="middle" textLength="27" lengthAdjust="spacingAndGlyphs">Clust</text><rect x="42" y="304" width="31" height="22" fill="#d4d0c8" /><rect x="42" y="304" width="31" height="1" fill="#ffffff" /><rect x="42" y="304" width="1" height="22" fill="#ffffff" /><rect x="42" y="325" width="31" height="1" fill="#404040" /><rect x="72" y="304" width="1" height="22" fill="#404040" /><rect x="43" y="324" width="29" height="1" fill="#808080" /><rect x="71" y="305" width="1" height="20" fill="#808080" /><text x="57.5" y="314" font-family="Liberation Serif" font-size="10.5" font-weight="normal" fill="#000" text-anchor="middle" textLength="27" lengthAdjust="spacingAndGlyphs">Seas-</text><text x="57.5" y="323" font-family="Liberation Serif" font-size="10.5" font-weight="normal" fill="#000" text-anchor="middle" textLength="27" lengthAdjust="spacingAndGlyphs">onals</text><rect x="42" y="326" width="31" height="22" fill="#d4d0c8" /><rect x="42" y="326" width="31" height="1" fill="#ffffff" /><rect x="42" y="326" width="1" height="22" fill="#ffffff" /><rect x="42" y="347" width="31" height="1" fill="#404040" /><rect x="72" y="326" width="1" height="22" fill="#404040" /><rect x="43" y="346" width="29" height="1" fill="#808080" /><rect x="71" y="327" width="1" height="20" fill="#808080" /><text x="57.5" y="336" font-family="Liberation Serif" font-size="10.5" font-weight="normal" fill="#000" text-anchor="middle" textLength="24.0" lengthAdjust="spacingAndGlyphs">TJ's</text><text x="57.5" y="345" font-family="Liberation Serif" font-size="10.5" font-weight="normal" fill="#000" text-anchor="middle" textLength="17.4" lengthAdjust="spacingAndGlyphs">Web</text><rect x="42" y="348" width="31" height="22" fill="#d4d0c8" /><rect x="42" y="348" width="31" height="1" fill="#ffffff" /><rect x="42" y="348" width="1" height="22" fill="#ffffff" /><rect x="42" y="369" width="31" height="1" fill="#404040" /><rect x="72" y="348" width="1" height="22" fill="#404040" /><rect x="43" y="368" width="29" height="1" fill="#808080" /><rect x="71" y="349" width="1" height="20" fill="#808080" /><text x="57.5" y="358" font-family="Liberation Serif" font-size="10.5" font-weight="normal" fill="#000" text-anchor="middle" textLength="27" lengthAdjust="spacingAndGlyphs">Trade</text><text x="57.5" y="367" font-family="Liberation Serif" font-size="10.5" font-weight="normal" fill="#000" text-anchor="middle" textLength="27" lengthAdjust="spacingAndGlyphs">Profile</text><rect x="42" y="370" width="31" height="22" fill="#ffffff" /><rect x="42" y="370" width="31" height="22" fill="url(#dith)" /><rect x="42" y="370" width="31" height="1" fill="#404040" /><rect x="42" y="370" width="1" height="22" fill="#404040" /><rect x="43" y="371" width="29" height="1" fill="#808080" /><rect x="43" y="371" width="1" height="20" fill="#808080" /><rect x="42" y="391" width="31" height="1" fill="#ffffff" /><rect x="72" y="370" width="1" height="22" fill="#ffffff" /><text x="57.5" y="386" font-family="Liberation Serif" font-size="13" text-anchor="middle"><tspan fill="#0000ff">X</tspan><tspan fill="#000">T</tspan><tspan fill="#ff0000">L</tspan></text><path d="M11 100 l3 -8 h4 l1 2 h8 v2 h-12 z" fill="#ffff80" stroke="#000" stroke-width="0.8"/><path d="M11 101 l4 -6 h14 l-4 6 z" fill="#808000" stroke="#000" stroke-width="0.8"/><path d="M21 90 q3 -3 6 0 l1 2" fill="none" stroke="#000" stroke-width="0.8"/><path d="M18 111 v14 M8 113 h20 M8 113 l-3 8 h6 z M28 113 l-3 8 h6 z" fill="none" stroke="#000" stroke-width="1"/><rect x="16" y="114" width="4" height="10" fill="#ffff00"/><path d="M5 121 h6 M25 121 h6" stroke="#ffff00" stroke-width="1.5"/><path d="M7 134 l3 -3 v2 h4 M7 134 l3 3 v-2 h4 M29 134 l-3 -3 v2 h-4 M29 134 l-3 3 v-2 h-4" fill="none" stroke="#000" stroke-width="1"/><circle cx="18" cy="134" r="1.6" fill="none" stroke="#000"/><text x="18" y="146" font-family="Liberation Sans" font-size="8" font-weight="bold" fill="#000" text-anchor="middle" >RESET</text><rect x="7" y="155" width="2" height="5" fill="#000"/><rect x="27" y="155" width="2" height="5" fill="#000"/><rect x="9" y="156" width="18" height="3" fill="#ffff00" stroke="#000" stroke-width="0.6"/><text x="18" y="168" font-family="Liberation Sans" font-size="8" font-weight="bold" fill="#000" text-anchor="middle" >STUDY</text><path d="M11 184 L16 178 L19 182 L24 176" fill="none" stroke="#ff0000" stroke-width="1"/><rect x="15" y="177" width="2" height="2" fill="#0000ff"/><rect x="18" y="181" width="2" height="2" fill="#0000ff"/><rect x="23" y="175" width="2" height="2" fill="#0000ff"/><text x="18" y="191" font-family="Liberation Sans" font-size="9" font-weight="bold" fill="#000" text-anchor="middle" >Elliott</text><path d="M18 198 l-7 7 h4 v6 h6 v-6 h4 z" fill="#fff" stroke="#000" stroke-width="1"/><path d="M18 234 l-7 -7 h4 v-6 h6 v6 h4 z" fill="#fff" stroke="#000" stroke-width="1"/><path d="M10 250 l7 -7 v4 h6 v6 h-6 v4 z" fill="#fff" stroke="#000" stroke-width="1"/><path d="M26 272 l-7 -7 v4 h-6 v6 h6 v4 z" fill="#fff" stroke="#000" stroke-width="1"/><path d="M8 287 h4 v12 h2 v3 h-6 z M22 287 h3 v14 h2 v2 h-5 z" fill="#fff" stroke="#000" stroke-width="1"/><line x1="18" y1="285" x2="18" y2="303" stroke="#000" stroke-width="1.2"/><path d="M7 316 l4 -4 v8 z M16 316 l-4 -4 v8 z M20 316 l4 -4 v8 z M29 316 l-4 -4 v8 z" fill="#fff" stroke="#000" stroke-width="0.9"/><line x1="18" y1="308" x2="18" y2="324" stroke="#000" stroke-width="1.2"/><path d="M8 337 l4 -4 l4 4 z M8 340 l4 4 l4 -4 z M22 331 h8 l-4 6 z M22 345 h8 l-4 -6 z" fill="#fff" stroke="#000" stroke-width="0.9"/><line x1="18" y1="330" x2="18" y2="346" stroke="#000" stroke-width="1.2"/><rect x="11" y="352" width="15" height="14" fill="#fff" stroke="#000" stroke-width="1.2"/><rect x="12" y="353" width="13" height="12" fill="url(#dots)"/><path d="M7 374 L29 384 M7 384 L29 374" stroke-width="1.2" fill="none"/><line x1="7" y1="375" x2="29" y2="384" stroke="#0000ff"/><line x1="7" y1="384" x2="29" y2="375" stroke="#ff0000"/><text x="18" y="391" font-family="Liberation Sans" font-size="8" font-weight="bold" fill="#000" text-anchor="middle" >LINES</text><line x1="7" y1="404" x2="29" y2="404" stroke="#000"/><line x1="8" y1="404" x2="27" y2="397" stroke="#0000ff"/><line x1="8" y1="404" x2="29" y2="399" stroke="#ff0000"/><line x1="8" y1="404" x2="15" y2="396" stroke="#008000"/><text x="18" y="413" font-family="Liberation Sans" font-size="8" font-weight="bold" fill="#000" text-anchor="middle" >GANN</text><line x1="7" y1="419" x2="29" y2="419" stroke="#000"/><line x1="7" y1="422" x2="29" y2="422" stroke="#000"/><line x1="7" y1="427" x2="29" y2="427" stroke="#000"/><text x="18" y="435" font-family="Liberation Sans" font-size="8" font-weight="bold" fill="#000" text-anchor="middle" >FIB</text><path d="M18 441 v14 M11 447 h15" stroke="#ff0000" stroke-width="2"/><rect x="11" y="469" width="13" height="11" fill="#fff" stroke="#000" stroke-width="1"/><path d="M13 473 h9 M13 476 h9" stroke="#000"/><path d="M16 470 l6 -4 l3 2 l-6 4z" fill="#fff" stroke="#000" stroke-width="0.8"/><path d="M25 464 v6 l2 -3 z" fill="#000080"/><rect x="77" y="74" width="1174" height="1" fill="#808080" /><rect x="77" y="75" width="1173" height="1" fill="#000000" /><rect x="77" y="76" width="1173" height="16" fill="#ffffe6" /><rect x="77" y="92" width="1174" height="1" fill="#ffffff" /><rect x="1250" y="74" width="1" height="19" fill="#ffffff" /><text x="82" y="89" font-family="Liberation Sans" font-size="13" font-weight="bold" fill="#000" text-anchor="start" >04/04/23</text><text x="493" y="89" font-family="Liberation Sans" font-size="13" font-weight="bold" fill="#000" text-anchor="start" >O:</text><text x="510.5" y="89" font-family="Liberation Sans" font-size="13" font-weight="bold" fill="#000" text-anchor="start" textLength="45.5" lengthAdjust="spacingAndGlyphs">4128.03</text><text x="569" y="89" font-family="Liberation Sans" font-size="13" font-weight="bold" fill="#0000ff" text-anchor="start" >H:</text><text x="587" y="89" font-family="Liberation Sans" font-size="13" font-weight="bold" fill="#000" text-anchor="start" textLength="46" lengthAdjust="spacingAndGlyphs">4133.13</text><text x="645" y="89" font-family="Liberation Sans" font-size="13" font-weight="bold" fill="#ff0000" text-anchor="start" >L:</text><text x="662.5" y="89" font-family="Liberation Sans" font-size="13" font-weight="bold" fill="#000" text-anchor="start" textLength="46" lengthAdjust="spacingAndGlyphs">4086.87</text><text x="720" y="89" font-family="Liberation Sans" font-size="13" font-weight="bold" fill="#000" text-anchor="start" >C:</text><text x="739" y="89" font-family="Liberation Sans" font-size="13" font-weight="bold" fill="#000" text-anchor="start" textLength="46" lengthAdjust="spacingAndGlyphs">4100.60</text><text x="1244" y="89" font-family="Liberation Sans" font-size="14" font-weight="bold" fill="#ff0000" text-anchor="end" >-23.91</text><rect x="77" y="95" width="1172" height="1" fill="#808080" /><rect x="77" y="96" width="1172" height="1" fill="#000000" /><rect x="77" y="96" width="2" height="654" fill="#000000" /><rect x="78" y="97" width="1110" height="653" fill="#ffffff" /><rect x="77" y="750" width="1172" height="1" fill="#ffffff" /><rect x="1188" y="97" width="60" height="653" fill="#d4d0c8" /><rect x="1188" y="97" width="1" height="653" fill="#000" /><rect x="1248" y="96" width="1" height="655" fill="#000" /><rect x="1189" y="97" width="59" height="8" fill="#ffffe6" /><rect x="1189" y="105" width="59" height="1" fill="#000" /><text x="1241" y="104" font-family="Liberation Sans" font-size="13" font-weight="bold" fill="#000" text-anchor="end" clip-path="url(#axclip)">4606.44</text><rect x="77" y="752" width="1172" height="1" fill="#808080" /><rect x="77" y="753" width="1172" height="2" fill="#000000" /><rect x="77" y="753" width="2" height="185" fill="#000000" /><rect x="79" y="755" width="1109" height="166" fill="#ffffff" /><rect x="1188" y="755" width="60" height="183" fill="#d4d0c8" /><rect x="1187" y="755" width="2" height="183" fill="#000" /><rect x="1247" y="753" width="2" height="185" fill="#000" /><rect x="79" y="937" width="1110" height="1" fill="#000" /><rect x="1189" y="937" width="59" height="1" fill="#000" /><rect x="79" y="921" width="1108" height="16" fill="#d4d0c8" /><rect x="79" y="922" width="16" height="15" fill="#d4d0c8" /><rect x="79" y="922" width="16" height="1" fill="#ffffff" /><rect x="79" y="922" width="1" height="15" fill="#ffffff" /><rect x="79" y="936" width="16" height="1" fill="#404040" /><rect x="94" y="922" width="1" height="15" fill="#404040" /><rect x="80" y="935" width="14" height="1" fill="#808080" /><rect x="93" y="923" width="1" height="13" fill="#808080" /><rect x="95" y="922" width="17" height="15" fill="#d4d0c8" /><rect x="95" y="922" width="17" height="1" fill="#ffffff" /><rect x="95" y="922" width="1" height="15" fill="#ffffff" /><rect x="95" y="936" width="17" height="1" fill="#404040" /><rect x="111" y="922" width="1" height="15" fill="#404040" /><rect x="96" y="935" width="15" height="1" fill="#808080" /><rect x="110" y="923" width="1" height="13" fill="#808080" /><path d="M84 929.5 l5 -4 v8 z" fill="#000"/><path d="M106 929.5 l-5 -4 v8 z" fill="#000"/><rect x="79" y="921" width="1108" height="1" fill="#000" /><rect x="171" y="936.5" width="442" height="1" fill="#000" /><path d="M207.5 921.5 L213.0 937" fill="none" stroke="#000" stroke-width="1"/><path d="M293 921.5 L298.5 937" fill="none" stroke="#000" stroke-width="1"/><path d="M377.6 921.5 L383.1 937" fill="none" stroke="#000" stroke-width="1"/><path d="M443 921.5 L448.5 937" fill="none" stroke="#000" stroke-width="1"/><path d="M502 921.5 L507.5 937" fill="none" stroke="#000" stroke-width="1"/><path d="M607.6 937 L613.6 921.5" fill="none" stroke="#000" stroke-width="1"/><path d="M111.7 921 L119.2 937 L168.7 937 L174.7 921 Z" fill="#ffffff"/><path d="M111.7 921 L119.2 937 L168.7 937 L174.7 921" fill="none" stroke="#000" stroke-width="1"/><text x="122.2" y="933" font-family="Liberation Sans" font-size="11.5" font-weight="normal" fill="#000" text-anchor="start" textLength="43.7" lengthAdjust="spacingAndGlyphs">Osc 5,35</text><text x="175.8" y="933" font-family="Liberation Sans" font-size="11.5" font-weight="normal" fill="#000" text-anchor="start" textLength="30.8" lengthAdjust="spacingAndGlyphs">CCI 20</text><text x="217.2" y="933" font-family="Liberation Sans" font-size="11.5" font-weight="normal" fill="#000" text-anchor="start" textLength="74.7" lengthAdjust="spacingAndGlyphs">MACD 19, 39, 9</text><text x="302.4" y="933" font-family="Liberation Sans" font-size="11.5" font-weight="normal" fill="#000" text-anchor="start" textLength="72.4" lengthAdjust="spacingAndGlyphs">Money Flow 11</text><text x="386" y="933" font-family="Liberation Sans" font-size="11.5" font-weight="normal" fill="#000" text-anchor="start" textLength="55" lengthAdjust="spacingAndGlyphs">RSI 14, 7, 3</text><text x="451" y="933" font-family="Liberation Sans" font-size="11.5" font-weight="normal" fill="#000" text-anchor="start" textLength="47.7" lengthAdjust="spacingAndGlyphs">RSI 2, 7, 3</text><text x="510" y="933" font-family="Liberation Sans" font-size="11.5" font-weight="normal" fill="#000" text-anchor="start" textLength="95" lengthAdjust="spacingAndGlyphs">On Balance Volume</text><rect x="77" y="940" width="1172" height="1" fill="#ffffff" /><rect x="77" y="943" width="1110" height="1" fill="#000" /><rect x="77" y="961" width="1110" height="2" fill="#000" /><rect x="77" y="943" width="1" height="20" fill="#000" /><rect x="1187" y="943" width="62" height="1" fill="#000" /><rect x="1187" y="943" width="1" height="20" fill="#000" /><rect x="1188" y="944" width="60" height="18" fill="#ffffe6" /><rect x="1248" y="943" width="1" height="20" fill="#808080" /><text x="1217" y="958" font-family="Liberation Sans" font-size="13" font-weight="bold" fill="#0000ff" text-anchor="middle" >#2937</text><rect x="199" y="944" width="2" height="17" fill="#000" /><text x="201" y="958" font-family="Liberation Sans" font-size="13" font-weight="bold" fill="#000" text-anchor="start" >Dec</text><rect x="486" y="944" width="2" height="17" fill="#000" /><text x="488" y="958" font-family="Liberation Sans" font-size="13" font-weight="bold" fill="#000" text-anchor="start" >Feb</text><rect x="619" y="944" width="2" height="17" fill="#000" /><text x="621" y="958" font-family="Liberation Sans" font-size="13" font-weight="bold" fill="#000" text-anchor="start" >Mar</text><rect x="780" y="944" width="2" height="17" fill="#000" /><text x="782" y="958" font-family="Liberation Sans" font-size="13" font-weight="bold" fill="#000" text-anchor="start" >Apr</text><rect x="319" y="945" width="54" height="15" fill="#ffffe6" stroke="#000" stroke-width="1"/><text x="320" y="958" font-family="Liberation Sans" font-size="13" font-weight="bold" fill="#000" text-anchor="start" >01/03/23</text><rect x="0" y="964" width="1280" height="1" fill="#ffffff" /><text x="2" y="980" font-family="Liberation Sans" font-size="12" font-weight="normal" fill="#000" text-anchor="start" textLength="92" lengthAdjust="spacingAndGlyphs">For Help, press F1</text><rect x="954" y="966" width="326" height="1" fill="#808080" /><rect x="954" y="966" width="1" height="17" fill="#808080" /><text x="956" y="980" font-family="Liberation Sans" font-size="12" font-weight="normal" fill="#000" text-anchor="start" textLength="133" lengthAdjust="spacingAndGlyphs">Page: 14 - SP 500 for blog</text><rect x="1190" y="746" width="1" height="1" fill="#000" /><rect x="1190" y="740" width="1" height="1" fill="#000" /><rect x="1190" y="734" width="1" height="1" fill="#000" /><rect x="1190" y="729" width="1" height="1" fill="#000" /><rect x="1190" y="723" width="6" height="1.6" fill="#000" /><text x="1197" y="728" font-family="Liberation Sans" font-size="13" font-weight="bold" fill="#000" text-anchor="start" >3500.00</text><rect x="1190" y="717" width="1" height="1" fill="#000" /><rect x="1190" y="712" width="1" height="1" fill="#000" /><rect x="1190" y="706" width="1" height="1" fill="#000" /><rect x="1190" y="700" width="1" height="1" fill="#000" /><rect x="1190" y="695" width="3" height="1.4" fill="#000" /><rect x="1190" y="689" width="1" height="1" fill="#000" /><rect x="1190" y="684" width="1" height="1" fill="#000" /><rect x="1190" y="678" width="1" height="1" fill="#000" /><rect x="1190" y="672" width="1" height="1" fill="#000" /><rect x="1190" y="667" width="6" height="1.6" fill="#000" /><text x="1197" y="672" font-family="Liberation Sans" font-size="13" font-weight="bold" fill="#000" text-anchor="start" >3600.00</text><rect x="1190" y="661" width="1" height="1" fill="#000" /><rect x="1190" y="655" width="1" height="1" fill="#000" /><rect x="1190" y="650" width="1" height="1" fill="#000" /><rect x="1190" y="644" width="1" height="1" fill="#000" /><rect x="1190" y="638" width="3" height="1.4" fill="#000" /><rect x="1190" y="633" width="1" height="1" fill="#000" /><rect x="1190" y="627" width="1" height="1" fill="#000" /><rect x="1190" y="621" width="1" height="1" fill="#000" /><rect x="1190" y="616" width="1" height="1" fill="#000" /><rect x="1190" y="610" width="6" height="1.6" fill="#000" /><text x="1197" y="615" font-family="Liberation Sans" font-size="13" font-weight="bold" fill="#000" text-anchor="start" >3700.00</text><rect x="1190" y="605" width="1" height="1" fill="#000" /><rect x="1190" y="599" width="1" height="1" fill="#000" /><rect x="1190" y="593" width="1" height="1" fill="#000" /><rect x="1190" y="588" width="1" height="1" fill="#000" /><rect x="1190" y="582" width="3" height="1.4" fill="#000" /><rect x="1190" y="576" width="1" height="1" fill="#000" /><rect x="1190" y="571" width="1" height="1" fill="#000" /><rect x="1190" y="565" width="1" height="1" fill="#000" /><rect x="1190" y="559" width="1" height="1" fill="#000" /><rect x="1190" y="554" width="6" height="1.6" fill="#000" /><text x="1197" y="559" font-family="Liberation Sans" font-size="13" font-weight="bold" fill="#000" text-anchor="start" >3800.00</text><rect x="1190" y="548" width="1" height="1" fill="#000" /><rect x="1190" y="543" width="1" height="1" fill="#000" /><rect x="1190" y="537" width="1" height="1" fill="#000" /><rect x="1190" y="531" width="1" height="1" fill="#000" /><rect x="1190" y="526" width="3" height="1.4" fill="#000" /><rect x="1190" y="520" width="1" height="1" fill="#000" /><rect x="1190" y="514" width="1" height="1" fill="#000" /><rect x="1190" y="509" width="1" height="1" fill="#000" /><rect x="1190" y="503" width="1" height="1" fill="#000" /><rect x="1190" y="497" width="6" height="1.6" fill="#000" /><text x="1197" y="502" font-family="Liberation Sans" font-size="13" font-weight="bold" fill="#000" text-anchor="start" >3900.00</text><rect x="1190" y="492" width="1" height="1" fill="#000" /><rect x="1190" y="486" width="1" height="1" fill="#000" /><rect x="1190" y="480" width="1" height="1" fill="#000" /><rect x="1190" y="475" width="1" height="1" fill="#000" /><rect x="1190" y="469" width="3" height="1.4" fill="#000" /><rect x="1190" y="464" width="1" height="1" fill="#000" /><rect x="1190" y="458" width="1" height="1" fill="#000" /><rect x="1190" y="452" width="1" height="1" fill="#000" /><rect x="1190" y="447" width="1" height="1" fill="#000" /><rect x="1190" y="441" width="6" height="1.6" fill="#000" /><text x="1197" y="446" font-family="Liberation Sans" font-size="13" font-weight="bold" fill="#000" text-anchor="start" >4000.00</text><rect x="1190" y="435" width="1" height="1" fill="#000" /><rect x="1190" y="430" width="1" height="1" fill="#000" /><rect x="1190" y="424" width="1" height="1" fill="#000" /><rect x="1190" y="418" width="1" height="1" fill="#000" /><rect x="1190" y="413" width="3" height="1.4" fill="#000" /><rect x="1190" y="407" width="1" height="1" fill="#000" /><rect x="1190" y="402" width="1" height="1" fill="#000" /><rect x="1190" y="396" width="1" height="1" fill="#000" /><rect x="1190" y="390" width="1" height="1" fill="#000" /><rect x="1190" y="385" width="6" height="1.6" fill="#000" /><text x="1197" y="390" font-family="Liberation Sans" font-size="13" font-weight="bold" fill="#000" text-anchor="start" >4100.00</text><rect x="1190" y="379" width="1" height="1" fill="#000" /><rect x="1190" y="373" width="1" height="1" fill="#000" /><rect x="1190" y="368" width="1" height="1" fill="#000" /><rect x="1190" y="362" width="1" height="1" fill="#000" /><rect x="1190" y="356" width="3" height="1.4" fill="#000" /><rect x="1190" y="351" width="1" height="1" fill="#000" /><rect x="1190" y="345" width="1" height="1" fill="#000" /><rect x="1190" y="339" width="1" height="1" fill="#000" /><rect x="1190" y="334" width="1" height="1" fill="#000" /><rect x="1190" y="328" width="6" height="1.6" fill="#000" /><text x="1197" y="333" font-family="Liberation Sans" font-size="13" font-weight="bold" fill="#000" text-anchor="start" >4200.00</text><rect x="1190" y="323" width="1" height="1" fill="#000" /><rect x="1190" y="317" width="1" height="1" fill="#000" /><rect x="1190" y="311" width="1" height="1" fill="#000" /><rect x="1190" y="306" width="1" height="1" fill="#000" /><rect x="1190" y="300" width="3" height="1.4" fill="#000" /><rect x="1190" y="294" width="1" height="1" fill="#000" /><rect x="1190" y="289" width="1" height="1" fill="#000" /><rect x="1190" y="283" width="1" height="1" fill="#000" /><rect x="1190" y="277" width="1" height="1" fill="#000" /><rect x="1190" y="272" width="6" height="1.6" fill="#000" /><text x="1197" y="277" font-family="Liberation Sans" font-size="13" font-weight="bold" fill="#000" text-anchor="start" >4300.00</text><rect x="1190" y="266" width="1" height="1" fill="#000" /><rect x="1190" y="261" width="1" height="1" fill="#000" /><rect x="1190" y="255" width="1" height="1" fill="#000" /><rect x="1190" y="249" width="1" height="1" fill="#000" /><rect x="1190" y="244" width="3" height="1.4" fill="#000" /><rect x="1190" y="238" width="1" height="1" fill="#000" /><rect x="1190" y="232" width="1" height="1" fill="#000" /><rect x="1190" y="227" width="1" height="1" fill="#000" /><rect x="1190" y="221" width="1" height="1" fill="#000" /><rect x="1190" y="215" width="6" height="1.6" fill="#000" /><text x="1197" y="220" font-family="Liberation Sans" font-size="13" font-weight="bold" fill="#000" text-anchor="start" >4400.00</text><rect x="1190" y="210" width="1" height="1" fill="#000" /><rect x="1190" y="204" width="1" height="1" fill="#000" /><rect x="1190" y="198" width="1" height="1" fill="#000" /><rect x="1190" y="193" width="1" height="1" fill="#000" /><rect x="1190" y="187" width="3" height="1.4" fill="#000" /><rect x="1190" y="182" width="1" height="1" fill="#000" /><rect x="1190" y="176" width="1" height="1" fill="#000" /><rect x="1190" y="170" width="1" height="1" fill="#000" /><rect x="1190" y="165" width="1" height="1" fill="#000" /><rect x="1190" y="159" width="6" height="1.6" fill="#000" /><text x="1197" y="164" font-family="Liberation Sans" font-size="13" font-weight="bold" fill="#000" text-anchor="start" >4500.00</text><rect x="1190" y="153" width="1" height="1" fill="#000" /><rect x="1190" y="148" width="1" height="1" fill="#000" /><rect x="1190" y="142" width="1" height="1" fill="#000" /><rect x="1190" y="136" width="1" height="1" fill="#000" /><rect x="1190" y="131" width="3" height="1.4" fill="#000" /><rect x="1190" y="125" width="1" height="1" fill="#000" /><rect x="1190" y="120" width="1" height="1" fill="#000" /><rect x="1190" y="114" width="1" height="1" fill="#000" /><rect x="1190" y="108" width="1" height="1" fill="#000" /><rect x="1190" y="919" width="1.5" height="1.5" fill="#000" /><rect x="1190" y="915" width="3" height="1.4" fill="#000" /><rect x="1190" y="911" width="1.5" height="1.5" fill="#000" /><rect x="1190" y="906" width="1.5" height="1.5" fill="#000" /><rect x="1190" y="902" width="1.5" height="1.5" fill="#000" /><rect x="1190" y="897" width="1.5" height="1.5" fill="#000" /><rect x="1190" y="893" width="6" height="1.6" fill="#000" /><rect x="1190" y="889" width="1.5" height="1.5" fill="#000" /><rect x="1190" y="884" width="1.5" height="1.5" fill="#000" /><rect x="1190" y="880" width="1.5" height="1.5" fill="#000" /><rect x="1190" y="875" width="1.5" height="1.5" fill="#000" /><rect x="1190" y="871" width="3" height="1.4" fill="#000" /><rect x="1190" y="867" width="1.5" height="1.5" fill="#000" /><rect x="1190" y="862" width="1.5" height="1.5" fill="#000" /><rect x="1190" y="858" width="1.5" height="1.5" fill="#000" /><rect x="1190" y="853" width="1.5" height="1.5" fill="#000" /><rect x="1190" y="849" width="6" height="1.6" fill="#000" /><text x="1197" y="854" font-family="Liberation Sans" font-size="13" font-weight="bold" fill="#000" text-anchor="start" >0</text><rect x="1190" y="845" width="1.5" height="1.5" fill="#000" /><rect x="1190" y="840" width="1.5" height="1.5" fill="#000" /><rect x="1190" y="836" width="1.5" height="1.5" fill="#000" /><rect x="1190" y="831" width="1.5" height="1.5" fill="#000" /><rect x="1190" y="827" width="3" height="1.4" fill="#000" /><rect x="1190" y="823" width="1.5" height="1.5" fill="#000" /><rect x="1190" y="818" width="1.5" height="1.5" fill="#000" /><rect x="1190" y="814" width="1.5" height="1.5" fill="#000" /><rect x="1190" y="809" width="1.5" height="1.5" fill="#000" /><rect x="1190" y="805" width="6" height="1.6" fill="#000" /><text x="1197" y="810" font-family="Liberation Sans" font-size="13" font-weight="bold" fill="#000" text-anchor="start" >100</text><rect x="1190" y="801" width="1.5" height="1.5" fill="#000" /><rect x="1190" y="796" width="1.5" height="1.5" fill="#000" /><rect x="1190" y="792" width="1.5" height="1.5" fill="#000" /><rect x="1190" y="787" width="1.5" height="1.5" fill="#000" /><rect x="1190" y="783" width="3" height="1.4" fill="#000" /><rect x="1190" y="779" width="1.5" height="1.5" fill="#000" /><rect x="1190" y="774" width="1.5" height="1.5" fill="#000" /><rect x="1190" y="770" width="1.5" height="1.5" fill="#000" /><rect x="1190" y="765" width="1.5" height="1.5" fill="#000" /><rect x="1190" y="761" width="6" height="1.6" fill="#000" /><text x="1197" y="766" font-family="Liberation Sans" font-size="13" font-weight="bold" fill="#000" text-anchor="start" >200</text><rect x="1190" y="757" width="1.5" height="1.5" fill="#000" /><rect x="1189" y="884" width="58" height="1" fill="#000" /><rect x="1189" y="885" width="58" height="16" fill="#ffffe6" /><rect x="1189" y="901" width="58" height="1" fill="#000" /><text x="1218" y="898" font-family="Liberation Sans" font-size="13" font-weight="bold" fill="#000" text-anchor="middle" >-100</text><rect x="1224" y="732" width="24" height="17" fill="#d4d0c8" /><rect x="1224" y="732" width="24" height="1" fill="#ffffff" /><rect x="1224" y="732" width="1" height="17" fill="#ffffff" /><rect x="1224" y="748" width="24" height="1" fill="#404040" /><rect x="1247" y="732" width="1" height="17" fill="#404040" /><rect x="1225" y="747" width="22" height="1" fill="#808080" /><rect x="1246" y="733" width="1" height="15" fill="#808080" /><path d="M1228 747 l3 -7 l3 7 z M1238 747 l3 -7 l3 7 z M1236 738 v9" fill="#ffff00" stroke="#000" stroke-width="0.8"/><rect x="1251" y="78" width="1" height="488" fill="#ffffff" /><rect x="1279" y="78" width="1" height="488" fill="#808080" /><rect x="1251" y="566" width="29" height="1" fill="#ffffff" /><rect x="1254" y="88" width="23" height="21" fill="#ffffff" /><rect x="1254" y="88" width="23" height="21" fill="url(#dith)" /><rect x="1254" y="88" width="23" height="1" fill="#404040" /><rect x="1254" y="88" width="1" height="21" fill="#404040" /><rect x="1255" y="89" width="21" height="1" fill="#808080" /><rect x="1255" y="89" width="1" height="19" fill="#808080" /><rect x="1254" y="108" width="23" height="1" fill="#ffffff" /><rect x="1276" y="88" width="1" height="21" fill="#ffffff" /><rect x="1254" y="109" width="23" height="21" fill="#d4d0c8" /><rect x="1254" y="109" width="23" height="1" fill="#ffffff" /><rect x="1254" y="109" width="1" height="21" fill="#ffffff" /><rect x="1254" y="129" width="23" height="1" fill="#404040" /><rect x="1276" y="109" width="1" height="21" fill="#404040" /><rect x="1255" y="128" width="21" height="1" fill="#808080" /><rect x="1275" y="110" width="1" height="19" fill="#808080" /><rect x="1254" y="131" width="23" height="21" fill="#d4d0c8" /><rect x="1254" y="131" width="23" height="1" fill="#ffffff" /><rect x="1254" y="131" width="1" height="21" fill="#ffffff" /><rect x="1254" y="151" width="23" height="1" fill="#404040" /><rect x="1276" y="131" width="1" height="21" fill="#404040" /><rect x="1255" y="150" width="21" height="1" fill="#808080" /><rect x="1275" y="132" width="1" height="19" fill="#808080" /><rect x="1254" y="153" width="23" height="21" fill="#d4d0c8" /><rect x="1254" y="153" width="23" height="1" fill="#ffffff" /><rect x="1254" y="153" width="1" height="21" fill="#ffffff" /><rect x="1254" y="173" width="23" height="1" fill="#404040" /><rect x="1276" y="153" width="1" height="21" fill="#404040" /><rect x="1255" y="172" width="21" height="1" fill="#808080" /><rect x="1275" y="154" width="1" height="19" fill="#808080" /><rect x="1254" y="175" width="23" height="21" fill="#d4d0c8" /><rect x="1254" y="175" width="23" height="1" fill="#ffffff" /><rect x="1254" y="175" width="1" height="21" fill="#ffffff" /><rect x="1254" y="195" width="23" height="1" fill="#404040" /><rect x="1276" y="175" width="1" height="21" fill="#404040" /><rect x="1255" y="194" width="21" height="1" fill="#808080" /><rect x="1275" y="176" width="1" height="19" fill="#808080" /><rect x="1254" y="197" width="23" height="21" fill="#d4d0c8" /><rect x="1254" y="197" width="23" height="1" fill="#ffffff" /><rect x="1254" y="197" width="1" height="21" fill="#ffffff" /><rect x="1254" y="217" width="23" height="1" fill="#404040" /><rect x="1276" y="197" width="1" height="21" fill="#404040" /><rect x="1255" y="216" width="21" height="1" fill="#808080" /><rect x="1275" y="198" width="1" height="19" fill="#808080" /><rect x="1254" y="219" width="23" height="21" fill="#d4d0c8" /><rect x="1254" y="219" width="23" height="1" fill="#ffffff" /><rect x="1254" y="219" width="1" height="21" fill="#ffffff" /><rect x="1254" y="239" width="23" height="1" fill="#404040" /><rect x="1276" y="219" width="1" height="21" fill="#404040" /><rect x="1255" y="238" width="21" height="1" fill="#808080" /><rect x="1275" y="220" width="1" height="19" fill="#808080" /><rect x="1254" y="241" width="23" height="21" fill="#d4d0c8" /><rect x="1254" y="241" width="23" height="1" fill="#ffffff" /><rect x="1254" y="241" width="1" height="21" fill="#ffffff" /><rect x="1254" y="261" width="23" height="1" fill="#404040" /><rect x="1276" y="241" width="1" height="21" fill="#404040" /><rect x="1255" y="260" width="21" height="1" fill="#808080" /><rect x="1275" y="242" width="1" height="19" fill="#808080" /><rect x="1254" y="263" width="23" height="21" fill="#d4d0c8" /><rect x="1254" y="263" width="23" height="1" fill="#ffffff" /><rect x="1254" y="263" width="1" height="21" fill="#ffffff" /><rect x="1254" y="283" width="23" height="1" fill="#404040" /><rect x="1276" y="263" width="1" height="21" fill="#404040" /><rect x="1255" y="282" width="21" height="1" fill="#808080" /><rect x="1275" y="264" width="1" height="19" fill="#808080" /><rect x="1254" y="285" width="23" height="21" fill="#d4d0c8" /><rect x="1254" y="285" width="23" height="1" fill="#ffffff" /><rect x="1254" y="285" width="1" height="21" fill="#ffffff" /><rect x="1254" y="305" width="23" height="1" fill="#404040" /><rect x="1276" y="285" width="1" height="21" fill="#404040" /><rect x="1255" y="304" width="21" height="1" fill="#808080" /><rect x="1275" y="286" width="1" height="19" fill="#808080" /><rect x="1254" y="307" width="23" height="21" fill="#d4d0c8" /><rect x="1254" y="307" width="23" height="1" fill="#ffffff" /><rect x="1254" y="307" width="1" height="21" fill="#ffffff" /><rect x="1254" y="327" width="23" height="1" fill="#404040" /><rect x="1276" y="307" width="1" height="21" fill="#404040" /><rect x="1255" y="326" width="21" height="1" fill="#808080" /><rect x="1275" y="308" width="1" height="19" fill="#808080" /><rect x="1254" y="329" width="23" height="21" fill="#d4d0c8" /><rect x="1254" y="329" width="23" height="1" fill="#ffffff" /><rect x="1254" y="329" width="1" height="21" fill="#ffffff" /><rect x="1254" y="349" width="23" height="1" fill="#404040" /><rect x="1276" y="329" width="1" height="21" fill="#404040" /><rect x="1255" y="348" width="21" height="1" fill="#808080" /><rect x="1275" y="330" width="1" height="19" fill="#808080" /><rect x="1254" y="351" width="23" height="21" fill="#d4d0c8" /><rect x="1254" y="351" width="23" height="1" fill="#ffffff" /><rect x="1254" y="351" width="1" height="21" fill="#ffffff" /><rect x="1254" y="371" width="23" height="1" fill="#404040" /><rect x="1276" y="351" width="1" height="21" fill="#404040" /><rect x="1255" y="370" width="21" height="1" fill="#808080" /><rect x="1275" y="352" width="1" height="19" fill="#808080" /><rect x="1254" y="373" width="23" height="21" fill="#d4d0c8" /><rect x="1254" y="373" width="23" height="1" fill="#ffffff" /><rect x="1254" y="373" width="1" height="21" fill="#ffffff" /><rect x="1254" y="393" width="23" height="1" fill="#404040" /><rect x="1276" y="373" width="1" height="21" fill="#404040" /><rect x="1255" y="392" width="21" height="1" fill="#808080" /><rect x="1275" y="374" width="1" height="19" fill="#808080" /><rect x="1254" y="395" width="23" height="21" fill="#d4d0c8" /><rect x="1254" y="395" width="23" height="1" fill="#ffffff" /><rect x="1254" y="395" width="1" height="21" fill="#ffffff" /><rect x="1254" y="415" width="23" height="1" fill="#404040" /><rect x="1276" y="395" width="1" height="21" fill="#404040" /><rect x="1255" y="414" width="21" height="1" fill="#808080" /><rect x="1275" y="396" width="1" height="19" fill="#808080" /><rect x="1254" y="417" width="23" height="21" fill="#d4d0c8" /><rect x="1254" y="417" width="23" height="1" fill="#ffffff" /><rect x="1254" y="417" width="1" height="21" fill="#ffffff" /><rect x="1254" y="437" width="23" height="1" fill="#404040" /><rect x="1276" y="417" width="1" height="21" fill="#404040" /><rect x="1255" y="436" width="21" height="1" fill="#808080" /><rect x="1275" y="418" width="1" height="19" fill="#808080" /><rect x="1254" y="439" width="23" height="21" fill="#d4d0c8" /><rect x="1254" y="439" width="23" height="1" fill="#ffffff" /><rect x="1254" y="439" width="1" height="21" fill="#ffffff" /><rect x="1254" y="459" width="23" height="1" fill="#404040" /><rect x="1276" y="439" width="1" height="21" fill="#404040" /><rect x="1255" y="458" width="21" height="1" fill="#808080" /><rect x="1275" y="440" width="1" height="19" fill="#808080" /><rect x="1254" y="467" width="23" height="21" fill="#d4d0c8" /><rect x="1254" y="467" width="23" height="1" fill="#ffffff" /><rect x="1254" y="467" width="1" height="21" fill="#ffffff" /><rect x="1254" y="487" width="23" height="1" fill="#404040" /><rect x="1276" y="467" width="1" height="21" fill="#404040" /><rect x="1255" y="486" width="21" height="1" fill="#808080" /><rect x="1275" y="468" width="1" height="19" fill="#808080" /><rect x="1254" y="489" width="23" height="21" fill="#d4d0c8" /><rect x="1254" y="489" width="23" height="1" fill="#ffffff" /><rect x="1254" y="489" width="1" height="21" fill="#ffffff" /><rect x="1254" y="509" width="23" height="1" fill="#404040" /><rect x="1276" y="489" width="1" height="21" fill="#404040" /><rect x="1255" y="508" width="21" height="1" fill="#808080" /><rect x="1275" y="490" width="1" height="19" fill="#808080" /><rect x="1254" y="511" width="23" height="21" fill="#d4d0c8" /><rect x="1254" y="511" width="23" height="1" fill="#ffffff" /><rect x="1254" y="511" width="1" height="21" fill="#ffffff" /><rect x="1254" y="531" width="23" height="1" fill="#404040" /><rect x="1276" y="511" width="1" height="21" fill="#404040" /><rect x="1255" y="530" width="21" height="1" fill="#808080" /><rect x="1275" y="512" width="1" height="19" fill="#808080" /><rect x="1254" y="538" width="23" height="21" fill="#ffffff" /><rect x="1254" y="538" width="23" height="21" fill="url(#dith)" /><rect x="1254" y="538" width="23" height="1" fill="#404040" /><rect x="1254" y="538" width="1" height="21" fill="#404040" /><rect x="1255" y="539" width="21" height="1" fill="#808080" /><rect x="1255" y="539" width="1" height="19" fill="#808080" /><rect x="1254" y="558" width="23" height="1" fill="#ffffff" /><rect x="1276" y="538" width="1" height="21" fill="#ffffff" /><path d="M1258 92 L1273 105 M1273 92 L1258 105" stroke="#000" stroke-width="2"/><path d="M1259 113 L1271 125" stroke="#000" stroke-width="5"/><path d="M1259 113 L1271 125" stroke="#ffff00" stroke-width="3"/><circle cx="1272" cy="126" r="1.6" fill="#800000"/><path d="M1258 144 L1274 135 M1258 147 L1274 138 M1258 150 L1274 141" stroke-width="1" fill="none"/><line x1="1258" y1="144" x2="1274" y2="135" stroke="#0000ff"/><line x1="1258" y1="147" x2="1274" y2="138" stroke="#000"/><line x1="1258" y1="150" x2="1274" y2="141" stroke="#ff0000"/><text x="1265.5" y="163" font-family="Liberation Sans" font-size="9.5" font-weight="bold" fill="#000" text-anchor="middle" textLength="15" lengthAdjust="spacingAndGlyphs">FIB</text><text x="1265.5" y="172" font-family="Liberation Sans" font-size="9.5" font-weight="bold" fill="#000" text-anchor="middle" textLength="15" lengthAdjust="spacingAndGlyphs">RET</text><text x="1265.5" y="185" font-family="Liberation Sans" font-size="9.5" font-weight="bold" fill="#000" text-anchor="middle" textLength="15" lengthAdjust="spacingAndGlyphs">FIB</text><text x="1265.5" y="194" font-family="Liberation Sans" font-size="9.5" font-weight="bold" fill="#000" text-anchor="middle" textLength="15" lengthAdjust="spacingAndGlyphs">EXT</text><text x="1265.5" y="207" font-family="Liberation Sans" font-size="9.5" font-weight="bold" fill="#000" text-anchor="middle" textLength="15" lengthAdjust="spacingAndGlyphs">FIB</text><text x="1265.5" y="216" font-family="Liberation Sans" font-size="9.5" font-weight="bold" fill="#000" text-anchor="middle" textLength="17" lengthAdjust="spacingAndGlyphs">TIME</text><path d="M1258 234 a7.5 7.5 0 0 1 15 0" fill="none" stroke="#ff0000" stroke-width="1.2"/><path d="M1260 234 a5.5 5.5 0 0 1 11 0" fill="none" stroke="#0000ff" stroke-width="1.2"/><text x="1265.5" y="239" font-family="Liberation Sans" font-size="8.5" font-weight="normal" fill="#000" text-anchor="middle" >FIB</text><g stroke-width="1"><line x1="1258" y1="251" x2="1273" y2="244" stroke="#0000ff"/><line x1="1258" y1="251" x2="1273" y2="248" stroke="#ff0000"/><line x1="1258" y1="251" x2="1273" y2="254" stroke="#000"/><line x1="1258" y1="251" x2="1273" y2="258" stroke="#0000ff"/><line x1="1258" y1="251" x2="1268" y2="259" stroke="#008000"/></g><rect x="1259" y="267" width="13" height="13" fill="#fff" stroke="#000"/><path d="M1262.5 267 v13 M1265.5 267 v13 M1268.5 267 v13 M1259 270.5 h13 M1259 273.5 h13 M1259 276.5 h13" stroke="#000" stroke-width="0.6"/><ellipse cx="1265.5" cy="293" rx="6.5" ry="4" fill="#00ffff" stroke="#ff0000" stroke-width="1"/><text x="1265.5" y="304" font-family="Liberation Sans" font-size="6.5" font-weight="bold" fill="#000" text-anchor="middle" >ELIPS</text><g stroke-width="1"><line x1="1258" y1="322" x2="1272" y2="312" stroke="#0000ff"/><line x1="1260" y1="324" x2="1273" y2="315" stroke="#ff0000"/><line x1="1262" y1="325" x2="1274" y2="318" stroke="#008000"/><line x1="1261" y1="312" x2="1272" y2="325" stroke="#000"/></g><text x="1265.5" y="346" font-family="Liberation Sans" font-size="13" font-weight="bold" fill="#000" text-anchor="middle" >PTI</text><rect x="1259" y="355" width="13" height="13" fill="#fff" stroke="#0000ff" stroke-width="1.2"/><path d="M1263.5 355 v13 M1267.5 355 v13 M1259 359.5 h13 M1259 363.5 h13" stroke="#0000ff" stroke-width="1"/><rect x="1259" y="377" width="13" height="2.5" fill="#ff00ff"/><rect x="1259" y="381" width="13" height="1" fill="#00ffff"/><text x="1265.5" y="392" font-family="Liberation Sans" font-size="8" font-weight="normal" fill="#000" text-anchor="middle" >MOB</text><circle cx="1268" cy="404" r="5" fill="#fff" stroke="#000"/><text x="1268" y="408" font-family="Liberation Sans" font-size="9" font-weight="bold" fill="#008000" text-anchor="middle">1</text><line x1="1264" y1="408" x2="1258" y2="414" stroke="#000" stroke-width="1.5"/><text x="1265.5" y="435" font-family="Liberation Serif" font-size="17" font-weight="bold" fill="#000" text-anchor="middle" >A</text><circle cx="1264" cy="447" r="5" fill="#fff" stroke="#000" stroke-width="1.2"/><path d="M1262 447 h4 M1264 445 v4" stroke="#000"/><line x1="1268" y1="451" x2="1273" y2="457" stroke="#000" stroke-width="2"/><path d="M1258 474 l5 -4 l9 9 l-4 5 z" fill="#ffff00" stroke="#000" stroke-width="0.8"/><path d="M1258 474 l5 -4 l3 3 l-5 4 z" fill="#c00000"/><rect x="1259" y="493" width="13" height="14" fill="#fff" stroke="#000" stroke-width="0.8"/><path d="M1260 494 l11 12 M1271 494 l-11 12 M1265.5 494 v12 M1259 500 h13" stroke="#000" stroke-width="0.6"/><rect x="1258" y="514" width="9" height="12" fill="#fff" stroke="#000" stroke-width="0.8"/><rect x="1263" y="517" width="10" height="13" fill="#fff" stroke="#000" stroke-width="0.8"/><path d="M1265 520 h6 M1265 523 h6 M1265 526 h6" stroke="#000" stroke-width="0.8"/><path d="M1260 542 v9 a5.5 5.5 0 0 0 11 0 v-9" fill="none" stroke="#ff0000" stroke-width="3.5"/>
<g clip-path="url(#mainclip)"><line x1="78" y1="152.5" x2="186" y2="152.5" stroke="#b4b4b4" stroke-width="1"/><line x1="78" y1="158.5" x2="137" y2="158.5" stroke="#b4b4b4" stroke-width="1"/><line x1="78" y1="202.5" x2="256" y2="202.5" stroke="#b4b4b4" stroke-width="1"/><line x1="78" y1="207.5" x2="207" y2="207.5" stroke="#808080" stroke-width="1"/><line x1="78" y1="213.5" x2="130" y2="213.5" stroke="#808080" stroke-width="1"/><line x1="78" y1="218.5" x2="88" y2="218.5" stroke="#808080" stroke-width="1"/><line x1="78" y1="231.5" x2="326" y2="231.5" stroke="#b4b4b4" stroke-width="1"/><line x1="115" y1="237.5" x2="326" y2="237.5" stroke="#b4b4b4" stroke-width="1"/><line x1="122" y1="243.5" x2="326" y2="243.5" stroke="#b4b4b4" stroke-width="1"/><line x1="171" y1="249" x2="327" y2="249" stroke="#808080" stroke-width="2"/><line x1="199" y1="255.5" x2="326" y2="255.5" stroke="#808080" stroke-width="1"/><line x1="255" y1="259.5" x2="326" y2="259.5" stroke="#808080" stroke-width="1"/><line x1="262" y1="263.5" x2="326" y2="263.5" stroke="#b4b4b4" stroke-width="1"/><line x1="304" y1="268.5" x2="326" y2="268.5" stroke="#b4b4b4" stroke-width="1"/><line x1="234" y1="268.5" x2="256" y2="268.5" stroke="#b4b4b4" stroke-width="1"/><line x1="199" y1="270.5" x2="221" y2="270.5" stroke="#b4b4b4" stroke-width="1"/><line x1="199" y1="288.5" x2="242" y2="288.5" stroke="#b4b4b4" stroke-width="1"/><line x1="213" y1="294.5" x2="242" y2="294.5" stroke="#b4b4b4" stroke-width="1"/><line x1="248" y1="286.5" x2="291" y2="286.5" stroke="#b4b4b4" stroke-width="1"/><line x1="248" y1="292.5" x2="277" y2="292.5" stroke="#b4b4b4" stroke-width="1"/><line x1="256" y1="326.5" x2="326" y2="326.5" stroke="#b4b4b4" stroke-width="1"/><line x1="304" y1="324.5" x2="346" y2="324.5" stroke="#b4b4b4" stroke-width="1"/><line x1="263" y1="330.5" x2="340" y2="330.5" stroke="#b4b4b4" stroke-width="1"/><line x1="329" y1="233.5" x2="476" y2="233.5" stroke="#b4b4b4" stroke-width="1"/><line x1="329" y1="238.5" x2="476" y2="238.5" stroke="#b4b4b4" stroke-width="1"/><line x1="329" y1="248" x2="488" y2="248" stroke="#808080" stroke-width="2"/><line x1="329" y1="254.5" x2="459" y2="254.5" stroke="#808080" stroke-width="1"/><line x1="329" y1="259.5" x2="403" y2="259.5" stroke="#b4b4b4" stroke-width="1"/><line x1="329" y1="264.5" x2="396" y2="264.5" stroke="#b4b4b4" stroke-width="1"/><line x1="329" y1="268.5" x2="354" y2="268.5" stroke="#b4b4b4" stroke-width="1"/><line x1="476" y1="233.5" x2="542" y2="233.5" stroke="#b4b4b4" stroke-width="1"/><line x1="476" y1="243.5" x2="535" y2="243.5" stroke="#b4b4b4" stroke-width="1"/><line x1="521" y1="211.5" x2="668" y2="211.5" stroke="#b4b4b4" stroke-width="1"/><line x1="675" y1="211.5" x2="823" y2="211.5" stroke="#b4b4b4" stroke-width="1"/><line x1="527" y1="217.5" x2="668" y2="217.5" stroke="#b4b4b4" stroke-width="1"/><line x1="675" y1="217.5" x2="816" y2="217.5" stroke="#b4b4b4" stroke-width="1"/><line x1="563" y1="223.5" x2="668" y2="223.5" stroke="#808080" stroke-width="1"/><line x1="675" y1="223.5" x2="781" y2="223.5" stroke="#808080" stroke-width="1"/><line x1="605" y1="229.5" x2="668" y2="229.5" stroke="#b4b4b4" stroke-width="1"/><line x1="675" y1="229.5" x2="738" y2="229.5" stroke="#b4b4b4" stroke-width="1"/><line x1="647" y1="234.5" x2="668" y2="234.5" stroke="#808080" stroke-width="1"/><line x1="675" y1="234.5" x2="697" y2="234.5" stroke="#808080" stroke-width="1"/><line x1="675" y1="238.5" x2="682" y2="238.5" stroke="#b4b4b4" stroke-width="1"/><line x1="591" y1="595.5" x2="620" y2="595.5" stroke="#b4b4b4" stroke-width="1"/><line x1="626" y1="593.5" x2="655" y2="593.5" stroke="#b4b4b4" stroke-width="1"/><line x1="626" y1="598.5" x2="641" y2="598.5" stroke="#b4b4b4" stroke-width="1"/><line x1="605" y1="601.5" x2="619" y2="601.5" stroke="#808080" stroke-width="1"/><line x1="227" y1="273" x2="227" y2="308" stroke="#808080" stroke-width="2"/><line x1="325" y1="269" x2="325" y2="303" stroke="#808080" stroke-width="2"/><line x1="241" y1="296" x2="241" y2="331" stroke="#808080" stroke-width="2"/><line x1="304" y1="331" x2="304" y2="365" stroke="#808080" stroke-width="2"/><line x1="668" y1="239" x2="668" y2="274" stroke="#808080" stroke-width="2"/><line x1="619" y1="601" x2="619" y2="636" stroke="#808080" stroke-width="2"/><polyline points="81.0,653.0 95.0,654.0 116.0,645.0 142.0,636.0 176.0,625.0 186.0,621.0 210.0,611.0 235.0,606.0 262.0,602.0 276.0,603.0 317.0,613.0 354.0,619.0 378.0,620.0 415.0,611.0 456.0,602.0 480.0,592.0 517.0,572.0 554.0,559.0 578.0,556.0 615.0,559.0 636.0,558.0 656.0,558.0 697.0,569.0 734.0,572.0 758.0,571.0 788.0,562.0" fill="none" stroke="#008080" stroke-width="1" stroke-linejoin="round" /><polyline points="81.0,691.0 95.0,665.0 102.0,664.0 116.0,644.0 124.0,644.0 137.0,620.0 150.0,609.0 164.0,610.0 174.0,606.0 193.0,604.0 203.0,584.0 213.0,558.0 222.0,538.0 232.0,514.0 235.0,500.0 247.0,501.0 260.0,501.0 268.0,505.0 280.0,530.0 293.0,546.0 304.0,561.0 312.0,567.0 324.0,587.0 354.0,584.0 366.0,588.0 390.0,584.0 415.0,584.0 432.0,580.0 456.0,574.0 490.0,543.0 500.0,528.0 520.0,506.0 534.0,494.0 548.0,487.0 560.0,462.0 571.0,445.0 582.0,449.0 591.0,458.0 602.0,464.0 615.0,475.0 627.0,487.0 638.0,488.0 654.0,491.0 663.0,500.0 669.0,516.0 674.0,525.0 679.0,530.0 690.0,532.0 701.0,526.0 712.0,522.0 723.0,524.0 761.0,524.0 772.0,532.0 788.0,540.0" fill="none" stroke="#000000" stroke-width="1" stroke-linejoin="round" /><polyline points="80.0,517.0 94.0,500.0 113.0,482.0 131.0,461.0 146.0,447.0 157.0,440.0 172.0,429.0 186.0,422.0 198.0,404.0 214.0,390.0 229.0,380.0 239.0,377.0 259.0,375.0 276.0,378.0 297.0,391.0 317.0,406.0 337.0,422.0 358.0,437.0 378.0,443.0 398.0,445.0 419.0,440.0 439.0,428.0 456.0,412.0 476.0,392.0 497.0,370.0 517.0,347.0 537.0,337.0 554.0,327.0 566.0,316.0 578.0,315.0 590.0,316.0 609.0,323.0 629.0,331.0 636.0,335.0 648.0,339.0 666.0,357.0 687.0,374.0 697.0,384.0 709.0,391.0 730.0,395.0 754.0,396.0 770.0,391.0 788.0,385.0" fill="none" stroke="#a0a0a0" stroke-width="3" stroke-linejoin="round" /><polyline points="80.0,649.0 102.0,626.0 129.0,594.0 155.0,573.0 176.0,561.0 198.0,544.0 213.0,529.0 231.0,517.0 253.0,515.0 276.0,518.0 305.0,536.0 329.0,555.0 354.0,571.0 378.0,580.0 402.0,581.0 427.0,570.0 456.0,553.0 480.0,533.0 505.0,509.0 529.0,487.0 554.0,475.0 570.0,460.0 585.0,459.0 598.0,465.0 615.0,472.0 639.0,480.0 660.0,489.0 685.0,511.0 709.0,530.0 734.0,534.0 758.0,533.0 788.0,524.0" fill="none" stroke="#a0a0a0" stroke-width="3" stroke-linejoin="round" /><polyline points="78.0,477.0 89.0,481.0 98.0,468.0 118.0,440.0 134.0,429.0 147.0,416.0 159.0,405.0 171.0,387.0 185.0,382.0 192.0,370.0 200.0,362.0 205.0,362.0 215.0,367.0 227.0,376.0 235.0,397.0 250.0,397.0 265.0,395.0 277.0,384.0 291.0,375.0 301.0,376.0 313.0,380.0 325.0,379.0 337.0,402.0 352.0,428.0 368.0,435.0 382.0,441.0 396.0,447.0 411.0,440.0 425.0,435.0 439.0,418.0 456.0,397.0 472.0,382.0 486.0,376.0 515.0,334.0 527.0,331.0 541.0,325.0 556.0,320.0 570.0,333.0 588.0,331.0 619.0,319.0 635.0,326.0 648.0,339.0 660.0,350.0 675.0,346.0 687.0,365.0 697.0,384.0 709.0,404.0 730.0,410.0 754.0,410.0 768.0,400.0 788.0,380.0" fill="none" stroke="#800000" stroke-width="1" stroke-linejoin="round" /><polyline points="79.0,444.0 94.0,445.0 108.0,440.0 117.0,434.0 137.0,426.0 160.0,419.0 177.0,411.0 190.0,407.0 200.0,402.0 210.0,399.0 222.0,395.0 240.0,394.0 255.0,390.0 265.0,389.0 277.0,390.0 297.0,395.0 317.0,400.0 337.0,403.0 358.0,407.0 378.0,407.0 398.0,402.0 419.0,398.0 439.0,392.0 456.0,387.0 497.0,369.0 537.0,351.0 562.0,339.0 578.0,337.0 619.0,340.0 656.0,341.0 677.0,347.0 697.0,351.0 721.0,353.0 754.0,352.0 768.0,349.0 788.0,343.0" fill="none" stroke="#ff0000" stroke-width="1" stroke-linejoin="round" /><polyline points="79.0,390.0 140.0,402.0 200.0,413.0 276.0,426.0 358.0,441.0 406.0,452.0 456.0,464.0 526.0,472.0 578.0,475.0 636.0,475.0 697.0,476.0 746.0,480.0 788.0,476.0" fill="none" stroke="#0000ff" stroke-width="1" stroke-linejoin="round" /><polyline points="79.0,407.0 140.0,411.0 220.0,413.0 276.0,415.0 306.0,418.0 406.0,425.0 456.0,426.0 516.0,423.0 636.0,424.0 746.0,427.0 788.0,426.0" fill="none" stroke="#00ffff" stroke-width="1" stroke-linejoin="round" /><polyline points="81.0,578.5 102.0,554.5 129.0,522.5 155.0,499.5 176.0,491.5 186.0,487.5 208.0,467.5 231.0,450.5 242.0,445.5 258.0,442.5 276.0,446.5 306.0,464.5 329.0,482.5 354.0,499.5 378.0,506.5 402.0,510.5 427.0,504.5 456.0,483.5 473.0,465.5 495.0,440.5 509.0,422.5 526.0,409.5 546.0,396.5 571.0,385.5 601.0,388.5 637.0,405.5 656.0,417.5 677.0,434.5 697.0,450.5 717.0,459.5 738.0,461.5 758.0,458.5 778.0,452.5 788.0,450.5" fill="none" stroke="#00ffff" stroke-width="1" stroke-linejoin="round" /><polyline points="81.0,586.5 102.0,562.5 129.0,530.5 155.0,507.5 176.0,499.5 186.0,495.5 208.0,475.5 231.0,458.5 242.0,453.5 258.0,450.5 276.0,454.5 306.0,472.5 329.0,490.5 354.0,507.5 378.0,514.5 402.0,518.5 427.0,512.5 456.0,491.5 473.0,473.5 495.0,448.5 509.0,430.5 526.0,417.5 546.0,404.5 571.0,393.5 601.0,396.5 637.0,413.5 656.0,425.5 677.0,442.5 697.0,458.5 717.0,467.5 738.0,469.5 758.0,466.5 778.0,460.5 788.0,458.5" fill="none" stroke="#00ffff" stroke-width="1" stroke-linejoin="round" /><polyline points="81.0,582.5 102.0,558.5 129.0,526.5 155.0,503.5 176.0,495.5 186.0,491.5 208.0,471.5 231.0,454.5 242.0,449.5 258.0,446.5 276.0,450.5 306.0,468.5 329.0,486.5 354.0,503.5 378.0,510.5 402.0,514.5 427.0,508.5 456.0,487.5 473.0,469.5 495.0,444.5 509.0,426.5 526.0,413.5 546.0,400.5 571.0,389.5 601.0,392.5 637.0,409.5 656.0,421.5 677.0,438.5 697.0,454.5 717.0,463.5 738.0,465.5 758.0,462.5 778.0,456.5 788.0,454.5" fill="none" stroke="#ffff00" stroke-width="1" stroke-linejoin="round" /><polyline points="81.0,583.5 102.0,559.5 129.0,527.5 155.0,504.5 176.0,496.5 186.0,492.5 208.0,472.5 231.0,455.5 242.0,450.5 258.0,447.5 276.0,451.5 306.0,469.5 329.0,487.5 354.0,504.5 378.0,511.5 402.0,515.5 427.0,509.5 456.0,488.5 473.0,470.5 495.0,445.5 509.0,427.5 526.0,414.5 546.0,401.5 571.0,390.5 601.0,393.5 637.0,410.5 656.0,422.5 677.0,439.5 697.0,455.5 717.0,464.5 738.0,466.5 758.0,463.5 778.0,457.5 788.0,455.5" fill="none" stroke="#008080" stroke-width="1" stroke-linejoin="round" /><polyline points="79.0,540.0 98.0,540.0 108.0,537.0 129.0,527.0 155.0,519.0 176.0,511.0 186.0,509.0 210.0,497.0 235.0,492.0 259.0,488.0 276.0,489.0 305.0,495.0 329.0,500.0 354.0,505.0 378.0,505.0 402.0,499.0 427.0,494.0 456.0,488.0 476.0,479.0 507.0,462.0 526.0,452.0 548.0,444.0 571.0,439.0 593.0,440.0 627.0,441.0 649.0,442.0 665.0,445.0 677.0,449.0 697.0,452.0 717.0,454.0 758.0,454.0 778.0,449.0 788.0,445.0" fill="none" stroke="#000000" stroke-width="3.2" stroke-linejoin="round" /><polyline points="80,545.05 87,541.3833333333333 94,553.6055555555555 101,522.4203703703703 108,494.6302469135802 115,482.7701646090535 122,468.86344307270235 129,465.9256287151349 136,465.96708581008994 143,462.3280572067266 150,463.2353714711511 157,453.1735809807674 164,442.4657206538449 171,435.6604804358966 178,441.7903202905977 185,447.87688019373184 192,428.6012534624879 199,416.41750230832525 206,409.2950015388835 213,418.21333435925567 220,435.1588895728371 227,447.9559263818914 234,450.65395092126096 241,457.7859672808406 248,452.54064485389375 255,443.0437632359292 262,441.7125088239528 269,459.15833921596857 276,479.12222614397905 283,498.76481742931935 290,511.5265449528795 297,509.0343633019196 304,518.3729088679464 311,520.265272578631 318,524.1935150524206 325,535.479010034947 332,530.669340023298 339,529.4628933488654 346,531.6585955659102 353,527.4557303772734 360,532.9871535848489 367,520.6747690565659 374,512.4665127043772 381,501.9943418029182 388,485.3462278686121 395,471.9141519124081 402,459.9594346082721 409,453.32295640551473 416,460.8986376036765 423,470.94909173578435 430,464.31606115718955 437,450.8940407714597 444,442.6126938476398 451,437.42512923175985 458,425.6334194878399 465,415.4389463252266 472,418.6426308834844 479,409.7784205889896 486,395.8689470593264 493,375.26263137288424 500,369.85842091525615 507,370.9222806101708 514,361.6315204067805 521,364.1043469378537 528,371.4195646252358 535,375.6297097501572 542,370.10313983343815 549,366.4187598889588 556,361.62917325930584 563,369.10278217287055 570,376.41852144858035 577,396.62901429905355 584,411.10267619936906 591,416.7517841329127 598,428.1845227552751 605,433.47301517018343 612,439.66534344678894 619,447.460228964526 626,446.9901526430173 633,434.6767684286782 640,426.4678456191188 647,431.99523041274585 654,434.6801536084972 661,450.1367690723315 668,471.4411793815543 675,486.9774529210362 682,485.00163528069083 689,488.68442352046054 696,478.47294901364035 703,479.6652993424269 710,474.46019956161797 717,461.32346637441196 724,464.565644249608 731,464.7270961664053 738,460.5013974442702 745,456.6842649628468 752,455.4728433085645 759,443.9985622057097 766,431.68237480380645 773,412.47158320253766 780,396.66438880169176 787,390.4595925344612" fill="none" stroke="#ff00ff" stroke-width="1" stroke-linejoin="round" /><polyline points="80,555.8499999999999 87,552.1833333333333 94,564.4055555555555 101,533.2203703703702 108,505.4302469135802 115,493.5701646090535 122,479.66344307270236 129,476.7256287151349 136,476.76708581008995 143,473.1280572067266 150,474.0353714711511 157,463.9735809807674 164,453.26572065384494 171,446.4604804358966 178,452.59032029059773 185,458.67688019373185 192,439.4012534624879 199,427.21750230832527 206,420.09500153888354 213,429.0133343592557 220,445.9588895728371 227,458.7559263818914 234,461.45395092126097 241,468.58596728084063 248,463.34064485389376 255,453.8437632359292 262,452.5125088239528 269,469.9583392159686 276,489.92222614397906 283,509.56481742931936 290,522.3265449528794 297,519.8343633019196 304,529.1729088679464 311,531.0652725786309 318,534.9935150524205 325,546.279010034947 332,541.469340023298 339,540.2628933488653 346,542.4585955659102 353,538.2557303772734 360,543.7871535848489 367,531.4747690565658 374,523.2665127043772 381,512.7943418029182 388,496.14622786861213 395,482.7141519124081 402,470.7594346082721 409,464.12295640551474 416,471.6986376036765 423,481.74909173578436 430,475.11606115718956 437,461.6940407714597 444,453.4126938476398 451,448.22512923175987 458,436.4334194878399 465,426.2389463252266 472,429.4426308834844 479,420.5784205889896 486,406.6689470593264 493,386.06263137288425 500,380.65842091525616 507,381.7222806101708 514,372.4315204067805 521,374.9043469378537 528,382.2195646252358 535,386.4297097501572 542,380.90313983343816 549,377.2187598889588 556,372.42917325930586 563,379.90278217287056 570,387.21852144858036 577,407.42901429905356 584,421.90267619936907 591,427.5517841329127 598,438.9845227552751 605,444.27301517018344 612,450.46534344678895 619,458.260228964526 626,457.79015264301734 633,445.4767684286782 640,437.2678456191188 647,442.79523041274587 654,445.48015360849723 661,460.9367690723315 668,482.24117938155433 675,497.77745292103623 682,495.80163528069085 689,499.48442352046055 696,489.27294901364036 703,490.46529934242693 710,485.260199561618 717,472.123466374412 724,475.365644249608 731,475.52709616640533 738,471.3013974442702 745,467.4842649628468 752,466.2728433085645 759,454.7985622057097 766,442.48237480380647 773,423.27158320253767 780,407.46438880169177 787,401.2595925344612" fill="none" stroke="#ff00ff" stroke-width="1" stroke-linejoin="round" /><polyline points="80,550.55 87,546.8833333333333 94,559.1055555555555 101,527.9203703703703 108,500.1302469135802 115,488.2701646090535 122,474.36344307270235 129,471.4256287151349 136,471.46708581008994 143,467.8280572067266 150,468.7353714711511 157,458.6735809807674 164,447.9657206538449 171,441.1604804358966 178,447.2903202905977 185,453.37688019373184 192,434.1012534624879 199,421.91750230832525 206,414.7950015388835 213,423.71333435925567 220,440.6588895728371 227,453.4559263818914 234,456.15395092126096 241,463.2859672808406 248,458.04064485389375 255,448.5437632359292 262,447.2125088239528 269,464.65833921596857 276,484.62222614397905 283,504.26481742931935 290,517.0265449528795 297,514.5343633019196 304,523.8729088679464 311,525.765272578631 318,529.6935150524206 325,540.979010034947 332,536.169340023298 339,534.9628933488654 346,537.1585955659102 353,532.9557303772734 360,538.4871535848489 367,526.1747690565659 374,517.9665127043772 381,507.4943418029182 388,490.8462278686121 395,477.4141519124081 402,465.4594346082721 409,458.82295640551473 416,466.3986376036765 423,476.44909173578435 430,469.81606115718955 437,456.3940407714597 444,448.1126938476398 451,442.92512923175985 458,431.1334194878399 465,420.9389463252266 472,424.1426308834844 479,415.2784205889896 486,401.3689470593264 493,380.76263137288424 500,375.35842091525615 507,376.4222806101708 514,367.1315204067805 521,369.6043469378537 528,376.9195646252358 535,381.1297097501572 542,375.60313983343815 549,371.9187598889588 556,367.12917325930584 563,374.60278217287055 570,381.91852144858035 577,402.12901429905355 584,416.60267619936906 591,422.2517841329127 598,433.6845227552751 605,438.97301517018343 612,445.16534344678894 619,452.960228964526 626,452.4901526430173 633,440.1767684286782 640,431.9678456191188 647,437.49523041274585 654,440.1801536084972 661,455.6367690723315 668,476.9411793815543 675,492.4774529210362 682,490.50163528069083 689,494.18442352046054 696,483.97294901364035 703,485.1652993424269 710,479.96019956161797 717,466.82346637441196 724,470.065644249608 731,470.2270961664053 738,466.0013974442702 745,462.1842649628468 752,460.9728433085645 759,449.4985622057097 766,437.18237480380645 773,417.97158320253766 780,402.16438880169176 787,395.9595925344612" fill="none" stroke="#00ff00" stroke-width="1" stroke-linejoin="round" /><polyline points="80,519.55 87,515.8833333333333 94,528.1055555555555 101,496.9203703703703 108,469.1302469135802 115,457.2701646090535 122,443.36344307270235 129,440.4256287151349 136,440.46708581008994 143,436.8280572067266 150,437.7353714711511 157,427.6735809807674 164,416.9657206538449 171,410.1604804358966 178,416.2903202905977 185,422.37688019373184 192,403.1012534624879 199,390.91750230832525 206,383.7950015388835 213,392.71333435925567 220,409.6588895728371 227,422.4559263818914 234,425.15395092126096 241,432.2859672808406 248,427.04064485389375 255,417.5437632359292 262,416.2125088239528 269,433.65833921596857 276,453.62222614397905 283,473.26481742931935 290,486.0265449528795 297,483.5343633019196 304,492.8729088679464 311,494.76527257863097 318,498.6935150524206 325,509.979010034947 332,505.169340023298 339,503.96289334886535 346,506.1585955659102 353,501.9557303772734 360,507.4871535848489 367,495.1747690565659 374,486.96651270437724 381,476.4943418029182 388,459.8462278686121 395,446.4141519124081 402,434.4594346082721 409,427.82295640551473 416,435.3986376036765 423,445.44909173578435 430,438.81606115718955 437,425.3940407714597 444,417.1126938476398 451,411.92512923175985 458,400.1334194878399 465,389.9389463252266 472,393.1426308834844 479,384.2784205889896 486,370.3689470593264 493,349.76263137288424 500,344.35842091525615 507,345.4222806101708 514,336.1315204067805 521,338.6043469378537 528,345.9195646252358 535,350.1297097501572 542,344.60313983343815 549,340.9187598889588 556,336.12917325930584 563,343.60278217287055 570,350.91852144858035 577,371.12901429905355 584,385.60267619936906 591,391.2517841329127 598,402.6845227552751 605,407.97301517018343 612,414.16534344678894 619,421.960228964526 626,421.4901526430173 633,409.1767684286782 640,400.9678456191188 647,406.49523041274585 654,409.1801536084972 661,424.6367690723315 668,445.9411793815543 675,461.4774529210362 682,459.50163528069083 689,463.18442352046054 696,452.97294901364035 703,454.1652993424269 710,448.96019956161797 717,435.82346637441196 724,439.065644249608 731,439.2270961664053 738,435.0013974442702 745,431.1842649628468 752,429.9728433085645 759,418.4985622057097 766,406.18237480380645 773,386.97158320253766 780,371.16438880169176 787,364.9595925344612" fill="none" stroke="#ff8000" stroke-width="1" stroke-linejoin="round" /><polyline points="80,581.55 87,577.8833333333333 94,590.1055555555555 101,558.9203703703703 108,531.1302469135802 115,519.2701646090535 122,505.36344307270235 129,502.4256287151349 136,502.46708581008994 143,498.8280572067266 150,499.7353714711511 157,489.6735809807674 164,478.9657206538449 171,472.1604804358966 178,478.2903202905977 185,484.37688019373184 192,465.1012534624879 199,452.91750230832525 206,445.7950015388835 213,454.71333435925567 220,471.6588895728371 227,484.4559263818914 234,487.15395092126096 241,494.2859672808406 248,489.04064485389375 255,479.5437632359292 262,478.2125088239528 269,495.65833921596857 276,515.6222261439791 283,535.2648174293194 290,548.0265449528795 297,545.5343633019196 304,554.8729088679464 311,556.765272578631 318,560.6935150524206 325,571.979010034947 332,567.169340023298 339,565.9628933488654 346,568.1585955659102 353,563.9557303772734 360,569.4871535848489 367,557.1747690565659 374,548.9665127043772 381,538.4943418029181 388,521.8462278686121 395,508.4141519124081 402,496.4594346082721 409,489.82295640551473 416,497.3986376036765 423,507.44909173578435 430,500.81606115718955 437,487.3940407714597 444,479.1126938476398 451,473.92512923175985 458,462.1334194878399 465,451.9389463252266 472,455.1426308834844 479,446.2784205889896 486,432.3689470593264 493,411.76263137288424 500,406.35842091525615 507,407.4222806101708 514,398.1315204067805 521,400.6043469378537 528,407.9195646252358 535,412.1297097501572 542,406.60313983343815 549,402.9187598889588 556,398.12917325930584 563,405.60278217287055 570,412.91852144858035 577,433.12901429905355 584,447.60267619936906 591,453.2517841329127 598,464.6845227552751 605,469.97301517018343 612,476.16534344678894 619,483.960228964526 626,483.4901526430173 633,471.1767684286782 640,462.9678456191188 647,468.49523041274585 654,471.1801536084972 661,486.6367690723315 668,507.9411793815543 675,523.4774529210363 682,521.5016352806908 689,525.1844235204605 696,514.9729490136403 703,516.1652993424269 710,510.96019956161797 717,497.82346637441196 724,501.065644249608 731,501.2270961664053 738,497.0013974442702 745,493.1842649628468 752,491.9728433085645 759,480.4985622057097 766,468.18237480380645 773,448.97158320253766 780,433.16438880169176 787,426.9595925344612" fill="none" stroke="#ff8000" stroke-width="1" stroke-linejoin="round" /><rect x="80" y="545" width="1" height="31" fill="#000000"/><rect x="78" y="551" width="5" height="15" fill="#000000"/><rect x="79" y="552" width="3" height="13" fill="#ffffff"/><rect x="87" y="521" width="1" height="45" fill="#000000"/><rect x="85" y="540" width="5" height="6" fill="#000000"/><rect x="86" y="541" width="3" height="4" fill="#ffffff"/><rect x="94" y="545" width="1" height="44" fill="#000000"/><rect x="92" y="548" width="5" height="37" fill="#000000"/><rect x="101" y="466" width="1" height="56" fill="#0000ff"/><rect x="99" y="466" width="5" height="56" fill="#0000ff"/><rect x="100" y="467" width="3" height="54" fill="#ffffff"/><rect x="108" y="441" width="1" height="32" fill="#0000ff"/><rect x="106" y="445" width="5" height="18" fill="#0000ff"/><rect x="107" y="446" width="3" height="16" fill="#ffffff"/><rect x="115" y="436" width="1" height="31" fill="#0000ff"/><rect x="113" y="454" width="5" height="12" fill="#0000ff"/><rect x="122" y="425" width="1" height="43" fill="#0000ff"/><rect x="120" y="438" width="5" height="10" fill="#0000ff"/><rect x="129" y="451" width="1" height="18" fill="#0000ff"/><rect x="127" y="455" width="5" height="12" fill="#0000ff"/><rect x="136" y="466" width="1" height="28" fill="#0000ff"/><rect x="134" y="472" width="5" height="16" fill="#0000ff"/><rect x="135" y="473" width="3" height="14" fill="#ffffff"/><rect x="143" y="453" width="1" height="25" fill="#0000ff"/><rect x="141" y="460" width="5" height="2" fill="#0000ff"/><rect x="150" y="462" width="1" height="17" fill="#0000ff"/><rect x="148" y="466" width="5" height="6" fill="#0000ff"/><rect x="157" y="437" width="1" height="29" fill="#0000ff"/><rect x="155" y="439" width="5" height="22" fill="#0000ff"/><rect x="156" y="440" width="3" height="20" fill="#ffffff"/><rect x="164" y="420" width="1" height="27" fill="#0000ff"/><rect x="162" y="427" width="5" height="15" fill="#0000ff"/><rect x="163" y="428" width="3" height="13" fill="#ffffff"/><rect x="171" y="421" width="1" height="11" fill="#0000ff"/><rect x="169" y="427" width="5" height="2" fill="#0000ff"/><rect x="178" y="434" width="1" height="32" fill="#0000ff"/><rect x="176" y="438" width="5" height="23" fill="#0000ff"/><rect x="185" y="456" width="1" height="21" fill="#0000ff"/><rect x="183" y="462" width="5" height="5" fill="#0000ff"/><rect x="192" y="392" width="1" height="84" fill="#0000ff"/><rect x="190" y="396" width="5" height="71" fill="#0000ff"/><rect x="191" y="397" width="3" height="69" fill="#ffffff"/><rect x="199" y="385" width="1" height="29" fill="#0000ff"/><rect x="197" y="392" width="5" height="7" fill="#0000ff"/><rect x="206" y="396" width="1" height="30" fill="#0000ff"/><rect x="204" y="401" width="5" height="19" fill="#0000ff"/><rect x="205" y="402" width="3" height="17" fill="#ffffff"/><rect x="213" y="412" width="1" height="39" fill="#0000ff"/><rect x="211" y="412" width="5" height="31" fill="#0000ff"/><rect x="220" y="443" width="1" height="44" fill="#0000ff"/><rect x="218" y="443" width="5" height="33" fill="#0000ff"/><rect x="227" y="465" width="1" height="21" fill="#000000"/><rect x="225" y="479" width="5" height="1" fill="#000000"/><rect x="234" y="456" width="1" height="23" fill="#0000ff"/><rect x="232" y="462" width="5" height="10" fill="#0000ff"/><rect x="233" y="463" width="3" height="8" fill="#ffffff"/><rect x="241" y="454" width="1" height="27" fill="#0000ff"/><rect x="239" y="467" width="5" height="12" fill="#0000ff"/><rect x="248" y="447" width="1" height="32" fill="#000000"/><rect x="246" y="448" width="5" height="29" fill="#000000"/><rect x="247" y="449" width="3" height="27" fill="#ffffff"/><rect x="255" y="384" width="1" height="61" fill="#0000ff"/><rect x="253" y="402" width="5" height="29" fill="#0000ff"/><rect x="262" y="411" width="1" height="51" fill="#0000ff"/><rect x="260" y="433" width="5" height="13" fill="#0000ff"/><rect x="269" y="465" width="1" height="44" fill="#000000"/><rect x="267" y="465" width="5" height="36" fill="#000000"/><rect x="276" y="503" width="1" height="36" fill="#000000"/><rect x="274" y="503" width="5" height="23" fill="#000000"/><rect x="283" y="524" width="1" height="30" fill="#000000"/><rect x="281" y="524" width="5" height="21" fill="#000000"/><rect x="290" y="533" width="1" height="25" fill="#000000"/><rect x="288" y="543" width="5" height="7" fill="#000000"/><rect x="289" y="544" width="3" height="5" fill="#ffffff"/><rect x="297" y="504" width="1" height="32" fill="#000000"/><rect x="295" y="510" width="5" height="23" fill="#000000"/><rect x="296" y="511" width="3" height="21" fill="#ffffff"/><rect x="304" y="524" width="1" height="49" fill="#ff0000"/><rect x="302" y="524" width="5" height="20" fill="#ff0000"/><rect x="311" y="530" width="1" height="27" fill="#ff0000"/><rect x="309" y="530" width="5" height="17" fill="#ff0000"/><rect x="310" y="531" width="3" height="15" fill="#ffffff"/><rect x="318" y="525" width="1" height="22" fill="#000000"/><rect x="316" y="530" width="5" height="9" fill="#000000"/><rect x="325" y="527" width="1" height="38" fill="#ff0000"/><rect x="323" y="538" width="5" height="27" fill="#ff0000"/><rect x="332" y="520" width="1" height="33" fill="#ff0000"/><rect x="330" y="527" width="5" height="25" fill="#ff0000"/><rect x="331" y="528" width="3" height="23" fill="#ffffff"/><rect x="339" y="533" width="1" height="24" fill="#ff0000"/><rect x="337" y="533" width="5" height="7" fill="#ff0000"/><rect x="338" y="534" width="3" height="5" fill="#ffffff"/><rect x="346" y="510" width="1" height="48" fill="#ff0000"/><rect x="344" y="524" width="5" height="19" fill="#ff0000"/><rect x="353" y="513" width="1" height="33" fill="#000000"/><rect x="351" y="525" width="5" height="8" fill="#000000"/><rect x="352" y="526" width="3" height="6" fill="#ffffff"/><rect x="360" y="532" width="1" height="22" fill="#ff0000"/><rect x="358" y="532" width="5" height="19" fill="#ff0000"/><rect x="367" y="494" width="1" height="56" fill="#ff0000"/><rect x="365" y="502" width="5" height="40" fill="#ff0000"/><rect x="366" y="503" width="3" height="38" fill="#ffffff"/><rect x="374" y="469" width="1" height="34" fill="#000000"/><rect x="372" y="492" width="5" height="11" fill="#000000"/><rect x="381" y="487" width="1" height="24" fill="#000000"/><rect x="379" y="487" width="5" height="18" fill="#000000"/><rect x="380" y="488" width="3" height="16" fill="#ffffff"/><rect x="388" y="458" width="1" height="24" fill="#000000"/><rect x="386" y="458" width="5" height="23" fill="#000000"/><rect x="387" y="459" width="3" height="21" fill="#ffffff"/><rect x="395" y="443" width="1" height="35" fill="#000000"/><rect x="393" y="451" width="5" height="5" fill="#000000"/><rect x="394" y="452" width="3" height="3" fill="#ffffff"/><rect x="402" y="438" width="1" height="33" fill="#000000"/><rect x="400" y="442" width="5" height="23" fill="#000000"/><rect x="401" y="443" width="3" height="21" fill="#ffffff"/><rect x="409" y="433" width="1" height="18" fill="#000000"/><rect x="407" y="442" width="5" height="5" fill="#000000"/><rect x="416" y="433" width="1" height="50" fill="#000000"/><rect x="414" y="441" width="5" height="42" fill="#000000"/><rect x="423" y="487" width="1" height="20" fill="#000000"/><rect x="421" y="491" width="5" height="7" fill="#000000"/><rect x="430" y="457" width="1" height="40" fill="#000000"/><rect x="428" y="457" width="5" height="38" fill="#000000"/><rect x="429" y="458" width="3" height="36" fill="#ffffff"/><rect x="437" y="420" width="1" height="39" fill="#000000"/><rect x="435" y="430" width="5" height="26" fill="#000000"/><rect x="436" y="431" width="3" height="24" fill="#ffffff"/><rect x="444" y="428" width="1" height="20" fill="#000000"/><rect x="442" y="432" width="5" height="9" fill="#000000"/><rect x="443" y="433" width="3" height="7" fill="#ffffff"/><rect x="451" y="430" width="1" height="40" fill="#000000"/><rect x="449" y="433" width="5" height="18" fill="#000000"/><rect x="450" y="434" width="3" height="16" fill="#ffffff"/><rect x="458" y="400" width="1" height="33" fill="#0000ff"/><rect x="456" y="408" width="5" height="14" fill="#0000ff"/><rect x="457" y="409" width="3" height="12" fill="#ffffff"/><rect x="465" y="389" width="1" height="26" fill="#0000ff"/><rect x="463" y="401" width="5" height="11" fill="#0000ff"/><rect x="464" y="402" width="3" height="9" fill="#ffffff"/><rect x="472" y="405" width="1" height="28" fill="#0000ff"/><rect x="470" y="413" width="5" height="19" fill="#0000ff"/><rect x="479" y="398" width="1" height="34" fill="#0000ff"/><rect x="477" y="398" width="5" height="33" fill="#0000ff"/><rect x="478" y="399" width="3" height="31" fill="#ffffff"/><rect x="486" y="357" width="1" height="64" fill="#0000ff"/><rect x="484" y="374" width="5" height="29" fill="#0000ff"/><rect x="485" y="375" width="3" height="27" fill="#ffffff"/><rect x="493" y="331" width="1" height="30" fill="#0000ff"/><rect x="491" y="340" width="5" height="13" fill="#0000ff"/><rect x="492" y="341" width="3" height="11" fill="#ffffff"/><rect x="500" y="338" width="1" height="38" fill="#0000ff"/><rect x="498" y="364" width="5" height="2" fill="#0000ff"/><rect x="507" y="370" width="1" height="20" fill="#0000ff"/><rect x="505" y="375" width="5" height="5" fill="#0000ff"/><rect x="514" y="342" width="1" height="49" fill="#0000ff"/><rect x="512" y="349" width="5" height="33" fill="#0000ff"/><rect x="513" y="350" width="3" height="31" fill="#ffffff"/><rect x="521" y="350" width="1" height="29" fill="#0000ff"/><rect x="519" y="354" width="5" height="22" fill="#0000ff"/><rect x="528" y="354" width="1" height="45" fill="#0000ff"/><rect x="526" y="360" width="5" height="33" fill="#0000ff"/><rect x="535" y="388" width="1" height="19" fill="#0000ff"/><rect x="533" y="390" width="5" height="13" fill="#0000ff"/><rect x="534" y="391" width="3" height="11" fill="#ffffff"/><rect x="542" y="362" width="1" height="28" fill="#0000ff"/><rect x="540" y="365" width="5" height="23" fill="#0000ff"/><rect x="541" y="366" width="3" height="21" fill="#ffffff"/><rect x="549" y="351" width="1" height="37" fill="#0000ff"/><rect x="547" y="365" width="5" height="8" fill="#0000ff"/><rect x="548" y="366" width="3" height="6" fill="#ffffff"/><rect x="556" y="357" width="1" height="25" fill="#0000ff"/><rect x="554" y="358" width="5" height="17" fill="#0000ff"/><rect x="555" y="359" width="3" height="15" fill="#ffffff"/><rect x="563" y="364" width="1" height="27" fill="#0000ff"/><rect x="561" y="375" width="5" height="16" fill="#0000ff"/><rect x="570" y="395" width="1" height="19" fill="#0000ff"/><rect x="568" y="396" width="5" height="2" fill="#0000ff"/><rect x="577" y="412" width="1" height="33" fill="#000000"/><rect x="575" y="412" width="5" height="32" fill="#000000"/><rect x="584" y="431" width="1" height="23" fill="#000000"/><rect x="582" y="440" width="5" height="7" fill="#000000"/><rect x="591" y="426" width="1" height="25" fill="#000000"/><rect x="589" y="431" width="5" height="4" fill="#000000"/><rect x="598" y="452" width="1" height="22" fill="#000000"/><rect x="596" y="456" width="5" height="2" fill="#000000"/><rect x="605" y="431" width="1" height="25" fill="#000000"/><rect x="603" y="446" width="5" height="5" fill="#000000"/><rect x="612" y="442" width="1" height="19" fill="#000000"/><rect x="610" y="454" width="5" height="5" fill="#000000"/><rect x="619" y="460" width="1" height="17" fill="#000000"/><rect x="617" y="462" width="5" height="8" fill="#000000"/><rect x="626" y="448" width="1" height="33" fill="#000000"/><rect x="624" y="452" width="5" height="23" fill="#000000"/><rect x="625" y="453" width="3" height="21" fill="#ffffff"/><rect x="633" y="416" width="1" height="29" fill="#000000"/><rect x="631" y="416" width="5" height="27" fill="#000000"/><rect x="632" y="417" width="3" height="25" fill="#ffffff"/><rect x="640" y="397" width="1" height="22" fill="#000000"/><rect x="638" y="411" width="5" height="6" fill="#000000"/><rect x="647" y="414" width="1" height="39" fill="#000000"/><rect x="645" y="414" width="5" height="36" fill="#000000"/><rect x="654" y="444" width="1" height="15" fill="#000000"/><rect x="652" y="446" width="5" height="3" fill="#000000"/><rect x="653" y="447" width="3" height="1" fill="#ffffff"/><rect x="661" y="443" width="1" height="50" fill="#ff0000"/><rect x="659" y="443" width="5" height="45" fill="#ff0000"/><rect x="668" y="491" width="1" height="37" fill="#ff0000"/><rect x="666" y="491" width="5" height="30" fill="#ff0000"/><rect x="675" y="495" width="1" height="54" fill="#ff0000"/><rect x="673" y="524" width="5" height="11" fill="#ff0000"/><rect x="674" y="525" width="3" height="9" fill="#ffffff"/><rect x="682" y="477" width="1" height="37" fill="#ff0000"/><rect x="680" y="487" width="5" height="14" fill="#ff0000"/><rect x="681" y="488" width="3" height="12" fill="#ffffff"/><rect x="689" y="502" width="1" height="24" fill="#ff0000"/><rect x="687" y="502" width="5" height="10" fill="#ff0000"/><rect x="688" y="503" width="3" height="8" fill="#ffffff"/><rect x="696" y="464" width="1" height="54" fill="#ff0000"/><rect x="694" y="464" width="5" height="48" fill="#ff0000"/><rect x="695" y="465" width="3" height="46" fill="#ffffff"/><rect x="703" y="465" width="1" height="32" fill="#ff0000"/><rect x="701" y="465" width="5" height="24" fill="#ff0000"/><rect x="710" y="467" width="1" height="24" fill="#000000"/><rect x="708" y="470" width="5" height="19" fill="#000000"/><rect x="709" y="471" width="3" height="17" fill="#ffffff"/><rect x="717" y="435" width="1" height="24" fill="#000000"/><rect x="715" y="441" width="5" height="15" fill="#000000"/><rect x="716" y="442" width="3" height="13" fill="#ffffff"/><rect x="724" y="419" width="1" height="60" fill="#000000"/><rect x="722" y="440" width="5" height="38" fill="#000000"/><rect x="731" y="437" width="1" height="51" fill="#000000"/><rect x="729" y="464" width="5" height="8" fill="#000000"/><rect x="738" y="455" width="1" height="38" fill="#000000"/><rect x="736" y="458" width="5" height="19" fill="#000000"/><rect x="737" y="459" width="3" height="17" fill="#ffffff"/><rect x="745" y="439" width="1" height="19" fill="#000000"/><rect x="743" y="451" width="5" height="5" fill="#000000"/><rect x="752" y="455" width="1" height="15" fill="#000000"/><rect x="750" y="455" width="5" height="5" fill="#000000"/><rect x="759" y="424" width="1" height="21" fill="#000000"/><rect x="757" y="427" width="5" height="16" fill="#000000"/><rect x="758" y="428" width="3" height="14" fill="#ffffff"/><rect x="766" y="408" width="1" height="15" fill="#000000"/><rect x="764" y="413" width="5" height="4" fill="#000000"/><rect x="765" y="414" width="3" height="2" fill="#ffffff"/><rect x="773" y="379" width="1" height="33" fill="#0000ff"/><rect x="771" y="380" width="5" height="31" fill="#0000ff"/><rect x="772" y="381" width="3" height="29" fill="#ffffff"/><rect x="780" y="369" width="1" height="18" fill="#0000ff"/><rect x="778" y="371" width="5" height="15" fill="#0000ff"/><rect x="779" y="372" width="3" height="13" fill="#ffffff"/><rect x="787" y="366" width="1" height="20" fill="#0000ff"/><rect x="785" y="369" width="5" height="16" fill="#0000ff"/><line x1="73" y1="98" x2="73" y2="123" stroke="#008080" stroke-width="1.2"/><polyline points="67,110 73,123 79,110" fill="none" stroke="#008080" stroke-width="1.2" stroke-linejoin="miter"/><line x1="129" y1="98" x2="129" y2="124" stroke="#ff00ff" stroke-width="1.2"/><polyline points="123,111 129,124 135,111" fill="none" stroke="#ff00ff" stroke-width="1.2" stroke-linejoin="miter"/><line x1="178" y1="98" x2="178" y2="124" stroke="#ff00ff" stroke-width="1.2"/><polyline points="172,111 178,124 184,111" fill="none" stroke="#ff00ff" stroke-width="1.2" stroke-linejoin="miter"/><line x1="199" y1="98" x2="199" y2="122" stroke="#008080" stroke-width="1.2"/><polyline points="193,109 199,122 205,109" fill="none" stroke="#008080" stroke-width="1.2" stroke-linejoin="miter"/><line x1="262" y1="100" x2="262" y2="126" stroke="#008080" stroke-width="1.2"/><polyline points="256,113 262,126 268,113" fill="none" stroke="#008080" stroke-width="1.2" stroke-linejoin="miter"/><line x1="374" y1="100" x2="374" y2="126" stroke="#ff00ff" stroke-width="1.2"/><polyline points="368,113 374,126 380,113" fill="none" stroke="#ff00ff" stroke-width="1.2" stroke-linejoin="miter"/><line x1="388" y1="98" x2="388" y2="125" stroke="#008080" stroke-width="1.2"/><polyline points="382,112 388,125 394,112" fill="none" stroke="#008080" stroke-width="1.2" stroke-linejoin="miter"/><line x1="459" y1="102" x2="459" y2="128" stroke="#008080" stroke-width="1.2"/><polyline points="453,115 459,128 465,115" fill="none" stroke="#008080" stroke-width="1.2" stroke-linejoin="miter"/><line x1="494" y1="100" x2="494" y2="126" stroke="#ff00ff" stroke-width="1.2"/><polyline points="488,113 494,126 500,113" fill="none" stroke="#ff00ff" stroke-width="1.2" stroke-linejoin="miter"/><line x1="557" y1="100" x2="557" y2="127" stroke="#008080" stroke-width="1.2"/><polyline points="551,114 557,127 563,114" fill="none" stroke="#008080" stroke-width="1.2" stroke-linejoin="miter"/><line x1="564" y1="99" x2="564" y2="127" stroke="#ff00ff" stroke-width="1.2"/><polyline points="558,114 564,127 570,114" fill="none" stroke="#ff00ff" stroke-width="1.2" stroke-linejoin="miter"/><line x1="584" y1="100" x2="584" y2="127" stroke="#008080" stroke-width="1.2"/><polyline points="578,114 584,127 590,114" fill="none" stroke="#008080" stroke-width="1.2" stroke-linejoin="miter"/><line x1="647" y1="101" x2="647" y2="127" stroke="#ff00ff" stroke-width="1.2"/><polyline points="641,114 647,127 653,114" fill="none" stroke="#ff00ff" stroke-width="1.2" stroke-linejoin="miter"/><line x1="675" y1="100" x2="675" y2="126" stroke="#008080" stroke-width="1.2"/><polyline points="669,113 675,126 681,113" fill="none" stroke="#008080" stroke-width="1.2" stroke-linejoin="miter"/><line x1="710" y1="100" x2="710" y2="126" stroke="#ff00ff" stroke-width="1.2"/><polyline points="704,113 710,126 716,113" fill="none" stroke="#ff00ff" stroke-width="1.2" stroke-linejoin="miter"/><line x1="732" y1="97" x2="732" y2="123" stroke="#008080" stroke-width="1.2"/><polyline points="726,110 732,123 738,110" fill="none" stroke="#008080" stroke-width="1.2" stroke-linejoin="miter"/><line x1="815" y1="97" x2="815" y2="123" stroke="#008080" stroke-width="1.2"/><polyline points="809,110 815,123 821,110" fill="none" stroke="#008080" stroke-width="1.2" stroke-linejoin="miter"/><line x1="864" y1="99" x2="864" y2="125" stroke="#ff00ff" stroke-width="1.2"/><polyline points="858,112 864,125 870,112" fill="none" stroke="#ff00ff" stroke-width="1.2" stroke-linejoin="miter"/><line x1="948" y1="97" x2="948" y2="123" stroke="#ff00ff" stroke-width="1.2"/><polyline points="942,110 948,123 954,110" fill="none" stroke="#ff00ff" stroke-width="1.2" stroke-linejoin="miter"/><line x1="94" y1="458" x2="94" y2="481" stroke="#ff0000" stroke-width="2.2"/><polyline points="85,460 94,481 103,460" fill="none" stroke="#ff0000" stroke-width="2.3" stroke-linejoin="miter"/><line x1="220" y1="387" x2="220" y2="411" stroke="#ff0000" stroke-width="2.2"/><polyline points="211,390 220,411 229,390" fill="none" stroke="#ff0000" stroke-width="2.3" stroke-linejoin="miter"/><line x1="241" y1="404" x2="241" y2="428" stroke="#ff0000" stroke-width="2.2"/><polyline points="232,407 241,428 250,407" fill="none" stroke="#ff0000" stroke-width="2.3" stroke-linejoin="miter"/><line x1="269" y1="380" x2="269" y2="405" stroke="#ff0000" stroke-width="2.2"/><polyline points="260,384 269,405 278,384" fill="none" stroke="#ff0000" stroke-width="2.3" stroke-linejoin="miter"/><line x1="304" y1="461" x2="304" y2="483" stroke="#ff0000" stroke-width="2.2"/><polyline points="295,462 304,483 313,462" fill="none" stroke="#ff0000" stroke-width="2.3" stroke-linejoin="miter"/><line x1="325" y1="444" x2="325" y2="469" stroke="#ff0000" stroke-width="2.2"/><polyline points="316,448 325,469 334,448" fill="none" stroke="#ff0000" stroke-width="2.3" stroke-linejoin="miter"/><line x1="360" y1="468" x2="360" y2="492" stroke="#ff0000" stroke-width="2.2"/><polyline points="351,471 360,492 369,471" fill="none" stroke="#ff0000" stroke-width="2.3" stroke-linejoin="miter"/><line x1="570" y1="340" x2="570" y2="364" stroke="#ff0000" stroke-width="2.2"/><polyline points="561,343 570,364 579,343" fill="none" stroke="#ff0000" stroke-width="2.3" stroke-linejoin="miter"/><line x1="647" y1="370" x2="647" y2="394" stroke="#ff0000" stroke-width="2.2"/><polyline points="638,373 647,394 656,373" fill="none" stroke="#ff0000" stroke-width="2.3" stroke-linejoin="miter"/><line x1="660" y1="388" x2="660" y2="412" stroke="#ff0000" stroke-width="2.2"/><polyline points="651,391 660,412 669,391" fill="none" stroke="#ff0000" stroke-width="2.3" stroke-linejoin="miter"/><line x1="689" y1="415" x2="689" y2="439" stroke="#ff0000" stroke-width="1.2"/><polyline points="683,426 689,439 695,426" fill="none" stroke="#ff0000" stroke-width="1.2" stroke-linejoin="miter"/><line x1="731" y1="386" x2="731" y2="410" stroke="#ff0000" stroke-width="1.2"/><polyline points="725,397 731,410 737,397" fill="none" stroke="#ff0000" stroke-width="1.2" stroke-linejoin="miter"/><line x1="738" y1="401" x2="738" y2="434" stroke="#ff0000" stroke-width="1.2"/><polyline points="732,421 738,434 744,421" fill="none" stroke="#ff0000" stroke-width="1.2" stroke-linejoin="miter"/><line x1="80" y1="635" x2="80" y2="602" stroke="#00ff00" stroke-width="2.2"/><polyline points="71,623 80,602 89,623" fill="none" stroke="#00ff00" stroke-width="2.3" stroke-linejoin="miter"/><line x1="101" y1="622" x2="101" y2="589" stroke="#00ff00" stroke-width="2.2"/><polyline points="92,610 101,589 110,610" fill="none" stroke="#00ff00" stroke-width="2.3" stroke-linejoin="miter"/><line x1="192" y1="549" x2="192" y2="518" stroke="#00ff00" stroke-width="2.2"/><polyline points="183,539 192,518 201,539" fill="none" stroke="#00ff00" stroke-width="2.3" stroke-linejoin="miter"/><line x1="247" y1="527" x2="247" y2="496" stroke="#00ff00" stroke-width="2.2"/><polyline points="238,517 247,496 256,517" fill="none" stroke="#00ff00" stroke-width="2.3" stroke-linejoin="miter"/><line x1="297" y1="593" x2="297" y2="562" stroke="#00ff00" stroke-width="2.2"/><polyline points="288,583 297,562 306,583" fill="none" stroke="#00ff00" stroke-width="2.3" stroke-linejoin="miter"/><line x1="332" y1="619" x2="332" y2="588" stroke="#00ff00" stroke-width="2.2"/><polyline points="323,609 332,588 341,609" fill="none" stroke="#00ff00" stroke-width="2.3" stroke-linejoin="miter"/><line x1="353" y1="615" x2="353" y2="582" stroke="#00ff00" stroke-width="2.2"/><polyline points="344,603 353,582 362,603" fill="none" stroke="#00ff00" stroke-width="2.3" stroke-linejoin="miter"/><line x1="367" y1="610" x2="367" y2="578" stroke="#00ff00" stroke-width="2.2"/><polyline points="358,599 367,578 376,599" fill="none" stroke="#00ff00" stroke-width="2.3" stroke-linejoin="miter"/><line x1="429" y1="553" x2="429" y2="522" stroke="#00ff00" stroke-width="2.2"/><polyline points="420,543 429,522 438,543" fill="none" stroke="#00ff00" stroke-width="2.3" stroke-linejoin="miter"/><line x1="479" y1="529" x2="479" y2="498" stroke="#00ff00" stroke-width="2.2"/><polyline points="470,519 479,498 488,519" fill="none" stroke="#00ff00" stroke-width="2.3" stroke-linejoin="miter"/><line x1="542" y1="474" x2="542" y2="443" stroke="#00ff00" stroke-width="2.2"/><polyline points="533,464 542,443 551,464" fill="none" stroke="#00ff00" stroke-width="2.3" stroke-linejoin="miter"/><line x1="626" y1="535" x2="626" y2="503" stroke="#00ff00" stroke-width="2.2"/><polyline points="617,524 626,503 635,524" fill="none" stroke="#00ff00" stroke-width="2.3" stroke-linejoin="miter"/><line x1="681" y1="584" x2="681" y2="553" stroke="#00ff00" stroke-width="2.2"/><polyline points="672,574 681,553 690,574" fill="none" stroke="#00ff00" stroke-width="2.3" stroke-linejoin="miter"/><line x1="697" y1="571" x2="697" y2="540" stroke="#00ff00" stroke-width="2.2"/><polyline points="688,561 697,540 706,561" fill="none" stroke="#00ff00" stroke-width="2.3" stroke-linejoin="miter"/><line x1="738" y1="564" x2="738" y2="533" stroke="#00ff00" stroke-width="2.2"/><polyline points="729,554 738,533 747,554" fill="none" stroke="#00ff00" stroke-width="2.3" stroke-linejoin="miter"/><line x1="529" y1="439" x2="529" y2="406" stroke="#00ff00" stroke-width="1.2"/><polyline points="523,419 529,406 535,419" fill="none" stroke="#00ff00" stroke-width="1.2" stroke-linejoin="miter"/><line x1="731" y1="525" x2="731" y2="492" stroke="#00ff00" stroke-width="1.2"/><polyline points="725,505 731,492 737,505" fill="none" stroke="#00ff00" stroke-width="1.2" stroke-linejoin="miter"/><line x1="92" y1="498" x2="92" y2="522" stroke="#808080" stroke-width="2"/><polyline points="83,502 92,522 101,502" fill="none" stroke="#808080" stroke-width="2.2" stroke-linejoin="miter"/><line x1="178" y1="371" x2="178" y2="396" stroke="#808080" stroke-width="2"/><polyline points="169,376 178,396 187,376" fill="none" stroke="#808080" stroke-width="2.2" stroke-linejoin="miter"/><line x1="213" y1="357" x2="213" y2="382" stroke="#808080" stroke-width="2"/><polyline points="204,362 213,382 222,362" fill="none" stroke="#808080" stroke-width="2.2" stroke-linejoin="miter"/><line x1="416" y1="383" x2="416" y2="406" stroke="#808080" stroke-width="2"/><polyline points="407,386 416,406 425,386" fill="none" stroke="#808080" stroke-width="2.2" stroke-linejoin="miter"/><line x1="472" y1="355" x2="472" y2="381" stroke="#808080" stroke-width="2"/><polyline points="463,361 472,381 481,361" fill="none" stroke="#808080" stroke-width="2.2" stroke-linejoin="miter"/><line x1="521" y1="311" x2="521" y2="333" stroke="#808080" stroke-width="2"/><polyline points="512,313 521,333 530,313" fill="none" stroke="#808080" stroke-width="2.2" stroke-linejoin="miter"/><line x1="528" y1="289" x2="528" y2="315" stroke="#808080" stroke-width="2"/><polyline points="519,295 528,315 537,295" fill="none" stroke="#808080" stroke-width="2.2" stroke-linejoin="miter"/><line x1="562" y1="320" x2="562" y2="340" stroke="#808080" stroke-width="2"/><polyline points="553,320 562,340 571,320" fill="none" stroke="#808080" stroke-width="2.2" stroke-linejoin="miter"/><line x1="689" y1="443" x2="689" y2="467" stroke="#808080" stroke-width="2"/><polyline points="680,447 689,467 698,447" fill="none" stroke="#808080" stroke-width="2.2" stroke-linejoin="miter"/><line x1="234" y1="536" x2="234" y2="504" stroke="#808080" stroke-width="2"/><polyline points="225,524 234,504 243,524" fill="none" stroke="#808080" stroke-width="2.2" stroke-linejoin="miter"/><line x1="310" y1="599" x2="310" y2="567" stroke="#808080" stroke-width="2"/><polyline points="301,587 310,567 319,587" fill="none" stroke="#808080" stroke-width="2.2" stroke-linejoin="miter"/><line x1="655" y1="527" x2="655" y2="496" stroke="#808080" stroke-width="2"/><polyline points="646,516 655,496 664,516" fill="none" stroke="#808080" stroke-width="2.2" stroke-linejoin="miter"/><line x1="374" y1="749" x2="374" y2="724" stroke="#808080" stroke-width="1.2"/><polyline points="368,737 374,724 380,737" fill="none" stroke="#808080" stroke-width="1.2" stroke-linejoin="miter"/><line x1="493" y1="749" x2="493" y2="723" stroke="#808080" stroke-width="1.2"/><polyline points="487,736 493,723 499,736" fill="none" stroke="#808080" stroke-width="1.2" stroke-linejoin="miter"/><text x="81" y="377" font-family="Liberation Sans" font-size="13.3" font-weight="bold" fill="#000" text-anchor="start">Small T</text><text x="72" y="284" font-family="Liberation Sans" font-size="13.3" font-weight="bold" fill="#000040" text-anchor="start">e</text><line x1="78" y1="340.5" x2="82" y2="340.5" stroke="#a0a0a0" stroke-width="1"/><text x="675" y="292" font-family="Liberation Sans" font-size="13.3" font-weight="bold" fill="#000" text-anchor="start">New T Structure</text><text x="591" y="653" font-family="Liberation Sans" font-size="13.3" font-weight="bold" fill="#000" text-anchor="start">T Structure</text><text x="591" y="669" font-family="Liberation Sans" font-size="13.3" font-weight="bold" fill="#000" text-anchor="start">collapsing into</text><text x="591" y="685" font-family="Liberation Sans" font-size="13.3" font-weight="bold" fill="#000" text-anchor="start">larger structure</text><text x="850" y="202" font-family="Liberation Sans" font-size="13.3" font-weight="bold" fill="#000" text-anchor="start">4412</text><line x1="836" y1="208.5" x2="893" y2="208.5" stroke="#ff0000" stroke-width="1"/><text x="850" y="315" font-family="Liberation Sans" font-size="13.3" font-weight="bold" fill="#000" text-anchor="start">4214</text><line x1="836" y1="320.5" x2="893" y2="320.5" stroke="#ff0000" stroke-width="1"/><text x="850" y="426" font-family="Liberation Sans" font-size="13.3" font-weight="bold" fill="#000" text-anchor="start">4016</text><line x1="836" y1="431.5" x2="893" y2="431.5" stroke="#ff0000" stroke-width="1"/><text x="850" y="639" font-family="Liberation Sans" font-size="13.3" font-weight="bold" fill="#000" text-anchor="start">3641</text><line x1="836" y1="644.5" x2="893" y2="644.5" stroke="#ff0000" stroke-width="1"/><text x="934" y="144" font-family="Liberation Sans" font-size="13.3" font-weight="bold" fill="#000" text-anchor="start">Next Echo and Pulse Highs</text><text x="934" y="208" font-family="Liberation Sans" font-size="13.3" font-weight="bold" fill="#000" text-anchor="start">* S/T BUY SIGNAL *</text><text x="934" y="224" font-family="Liberation Sans" font-size="13.3" font-weight="bold" fill="#000" text-anchor="start">* NO SHORT ALERT *</text><text x="934" y="256" font-family="Liberation Sans" font-size="13.3" font-weight="bold" fill="#000" text-anchor="start">S/T BUY Signal at 3959 on 24 Mar</text><text x="934" y="288" font-family="Liberation Sans" font-size="13.3" font-weight="bold" fill="#000" text-anchor="start">T volume Osc: positive on 29 Mar</text><text x="934" y="304" font-family="Liberation Sans" font-size="13.3" font-weight="bold" fill="#000" text-anchor="start">Down</text><text x="934" y="336" font-family="Liberation Sans" font-size="13.3" font-weight="bold" fill="#000" text-anchor="start">Osc: Buy Signal on 21 Mar</text><text x="934" y="352" font-family="Liberation Sans" font-size="13.3" font-weight="bold" fill="#000" text-anchor="start">Up</text><text x="934" y="432" font-family="Liberation Sans" font-size="13.3" font-weight="bold" fill="#000" text-anchor="start">Click here for</text><text x="934" y="448" font-family="Liberation Sans" font-size="13.3" font-weight="bold" fill="#000" text-anchor="start">More Information...</text><text x="934" y="720" font-family="Liberation Sans" font-size="13.3" font-weight="bold" fill="#000" text-anchor="start">Next Projected Low(s)</text></g>
<g clip-path="url(#oscclip)"><rect x="80" y="822" width="1.3" height="27" fill="#0000ff"/><rect x="87" y="826" width="1.3" height="23" fill="#0000ff"/><rect x="94" y="830" width="1.3" height="19" fill="#0000ff"/><rect x="101" y="815.5" width="1.3" height="33.5" fill="#0000ff"/><rect x="108" y="799" width="1.3" height="50" fill="#0000ff"/><rect x="115" y="786" width="1.3" height="63" fill="#0000ff"/><rect x="122" y="774.4" width="1.3" height="74.60000000000002" fill="#0000ff"/><rect x="129" y="764.6" width="1.3" height="84.39999999999998" fill="#0000ff"/><rect x="136" y="763" width="1.3" height="86" fill="#0000ff"/><rect x="143" y="768.9" width="1.3" height="80.10000000000002" fill="#0000ff"/><rect x="150" y="775.4" width="1.3" height="73.60000000000002" fill="#0000ff"/><rect x="157" y="779.4" width="1.3" height="69.60000000000002" fill="#0000ff"/><rect x="164" y="778.7" width="1.3" height="70.29999999999995" fill="#0000ff"/><rect x="171" y="772.8" width="1.3" height="76.20000000000005" fill="#0000ff"/><rect x="178" y="774.4" width="1.3" height="74.60000000000002" fill="#0000ff"/><rect x="185" y="778.7" width="1.3" height="70.29999999999995" fill="#0000ff"/><rect x="192" y="781" width="1.3" height="68" fill="#0000ff"/><rect x="199" y="782" width="1.3" height="67" fill="#0000ff"/><rect x="206" y="787" width="1.3" height="62" fill="#0000ff"/><rect x="213" y="787" width="1.3" height="62" fill="#0000ff"/><rect x="220" y="790.9" width="1.3" height="58.10000000000002" fill="#0000ff"/><rect x="227" y="799.7" width="1.3" height="49.299999999999955" fill="#0000ff"/><rect x="234" y="812.8" width="1.3" height="36.200000000000045" fill="#0000ff"/><rect x="241" y="824.6" width="1.3" height="24.399999999999977" fill="#0000ff"/><rect x="248" y="834.2" width="1.3" height="14.799999999999955" fill="#0000ff"/><rect x="255" y="828.6" width="1.3" height="20.399999999999977" fill="#0000ff"/><rect x="262" y="824.6" width="1.3" height="24.399999999999977" fill="#0000ff"/><rect x="269" y="828.6" width="1.3" height="20.399999999999977" fill="#0000ff"/><rect x="276" y="837.4" width="1.3" height="11.600000000000023" fill="#0000ff"/><rect x="283" y="848" width="1.3" height="2" fill="#0000ff"/><rect x="290" y="849" width="1.3" height="20.600000000000023" fill="#0000ff"/><rect x="297" y="849" width="1.3" height="33.700000000000045" fill="#0000ff"/><rect x="304" y="849" width="1.3" height="42.60000000000002" fill="#0000ff"/><rect x="311" y="849" width="1.3" height="47.799999999999955" fill="#0000ff"/><rect x="318" y="849" width="1.3" height="48.5" fill="#0000ff"/><rect x="325" y="849" width="1.3" height="50" fill="#0000ff"/><rect x="332" y="849" width="1.3" height="51.799999999999955" fill="#0000ff"/><rect x="339" y="849" width="1.3" height="51.799999999999955" fill="#0000ff"/><rect x="346" y="849" width="1.3" height="48.5" fill="#0000ff"/><rect x="353" y="849" width="1.3" height="46.799999999999955" fill="#0000ff"/><rect x="360" y="849" width="1.3" height="43.60000000000002" fill="#0000ff"/><rect x="367" y="849" width="1.3" height="38.60000000000002" fill="#0000ff"/><rect x="374" y="849" width="1.3" height="30.399999999999977" fill="#0000ff"/><rect x="381" y="849" width="1.3" height="23.899999999999977" fill="#0000ff"/><rect x="388" y="849" width="1.3" height="14" fill="#0000ff"/><rect x="395" y="849" width="1.3" height="2.5" fill="#0000ff"/><rect x="402" y="840" width="1.3" height="9" fill="#0000ff"/><rect x="409" y="832" width="1.3" height="17" fill="#0000ff"/><rect x="416" y="826" width="1.3" height="23" fill="#0000ff"/><rect x="423" y="829" width="1.3" height="20" fill="#0000ff"/><rect x="430" y="830" width="1.3" height="19" fill="#0000ff"/><rect x="437" y="830.7" width="1.3" height="18.299999999999955" fill="#0000ff"/><rect x="444" y="828" width="1.3" height="21" fill="#0000ff"/><rect x="451" y="824.4" width="1.3" height="24.600000000000023" fill="#0000ff"/><rect x="458" y="813" width="1.3" height="36" fill="#0000ff"/><rect x="465" y="802" width="1.3" height="47" fill="#0000ff"/><rect x="472" y="800" width="1.3" height="49" fill="#0000ff"/><rect x="479" y="798" width="1.3" height="51" fill="#0000ff"/><rect x="486" y="790.6" width="1.3" height="58.39999999999998" fill="#0000ff"/><rect x="493" y="781.2" width="1.3" height="67.79999999999995" fill="#0000ff"/><rect x="500" y="775.6" width="1.3" height="73.39999999999998" fill="#0000ff"/><rect x="507" y="770" width="1.3" height="79" fill="#0000ff"/><rect x="514" y="766.2" width="1.3" height="82.79999999999995" fill="#0000ff"/><rect x="521" y="766.2" width="1.3" height="82.79999999999995" fill="#0000ff"/><rect x="528" y="775.6" width="1.3" height="73.39999999999998" fill="#0000ff"/><rect x="535" y="785" width="1.3" height="64" fill="#0000ff"/><rect x="542" y="787" width="1.3" height="62" fill="#0000ff"/><rect x="549" y="792.5" width="1.3" height="56.5" fill="#0000ff"/><rect x="556" y="795.5" width="1.3" height="53.5" fill="#0000ff"/><rect x="563" y="800" width="1.3" height="49" fill="#0000ff"/><rect x="570" y="803.7" width="1.3" height="45.299999999999955" fill="#0000ff"/><rect x="577" y="815" width="1.3" height="34" fill="#0000ff"/><rect x="584" y="830" width="1.3" height="19" fill="#0000ff"/><rect x="591" y="842" width="1.3" height="7" fill="#0000ff"/><rect x="598" y="849" width="1.3" height="8" fill="#0000ff"/><rect x="605" y="849" width="1.3" height="16.600000000000023" fill="#0000ff"/><rect x="612" y="849" width="1.3" height="20.399999999999977" fill="#0000ff"/><rect x="619" y="849" width="1.3" height="28" fill="#0000ff"/><rect x="626" y="849" width="1.3" height="30.5" fill="#0000ff"/><rect x="633" y="849" width="1.3" height="26" fill="#0000ff"/><rect x="640" y="849" width="1.3" height="22.200000000000045" fill="#0000ff"/><rect x="647" y="849" width="1.3" height="18.5" fill="#0000ff"/><rect x="654" y="849" width="1.3" height="14.700000000000045" fill="#0000ff"/><rect x="661" y="849" width="1.3" height="14.700000000000045" fill="#0000ff"/><rect x="668" y="849" width="1.3" height="26" fill="#0000ff"/><rect x="675" y="849" width="1.3" height="43" fill="#0000ff"/><rect x="682" y="849" width="1.3" height="52" fill="#0000ff"/><rect x="689" y="849" width="1.3" height="59.700000000000045" fill="#0000ff"/><rect x="696" y="849" width="1.3" height="63.5" fill="#0000ff"/><rect x="703" y="849" width="1.3" height="58" fill="#0000ff"/><rect x="710" y="849" width="1.3" height="50.39999999999998" fill="#0000ff"/><rect x="717" y="849" width="1.3" height="41" fill="#0000ff"/><rect x="724" y="849" width="1.3" height="31.600000000000023" fill="#0000ff"/><rect x="731" y="849" width="1.3" height="26" fill="#0000ff"/><rect x="738" y="849" width="1.3" height="20.399999999999977" fill="#0000ff"/><rect x="745" y="849" width="1.3" height="14.700000000000045" fill="#0000ff"/><rect x="752" y="849" width="1.3" height="15" fill="#0000ff"/><rect x="759" y="849" width="1.3" height="12" fill="#0000ff"/><rect x="766" y="849" width="1.3" height="3" fill="#0000ff"/><rect x="773" y="839.4" width="1.3" height="9.600000000000023" fill="#0000ff"/><rect x="780" y="828" width="1.3" height="21" fill="#0000ff"/><rect x="787" y="815" width="1.3" height="34" fill="#0000ff"/><polyline points="80.0,797.0 98.0,801.0 112.0,801.0 131.0,796.0 148.0,792.5 164.0,791.0 184.0,789.0 203.0,787.6 223.0,788.6 236.0,791.0 256.0,796.0 276.0,801.0 394.0,801.0 400.0,802.0 456.0,811.0 494.0,805.6 542.0,796.0 561.0,797.0 591.0,802.0 767.0,802.0 788.0,806.7" fill="none" stroke="#000" stroke-width="1.2" stroke-linejoin="round" /><polyline points="279.0,920.4 295.0,915.5 328.0,910.6 361.0,907.3 394.0,899.1 420.0,899.1 591.0,899.4 599.0,895.6 662.0,886.2 685.0,888.1 711.0,891.9 737.0,888.1 764.0,883.2 788.0,883.2" fill="none" stroke="#000" stroke-width="1.2" stroke-linejoin="round" /><text x="79" y="768" font-family="Liberation Sans" font-size="13.3" font-weight="bold" fill="#000" text-anchor="start">Osc 5,35</text><text x="738" y="898" font-family="Liberation Sans" font-size="13.3" font-weight="bold" fill="#000" text-anchor="start">Osc Buy Signal</text><line x1="80" y1="757" x2="80" y2="790" stroke="#ff0000" stroke-width="2.2"/><polyline points="71,769 80,790 89,769" fill="none" stroke="#ff0000" stroke-width="2.3" stroke-linejoin="miter"/><line x1="220" y1="756" x2="220" y2="769" stroke="#ff0000" stroke-width="2.2"/><polyline points="211,748 220,769 229,748" fill="none" stroke="#ff0000" stroke-width="2.3" stroke-linejoin="miter"/><line x1="556" y1="755" x2="556" y2="779" stroke="#ff0000" stroke-width="2.2"/><polyline points="547,758 556,779 565,758" fill="none" stroke="#ff0000" stroke-width="2.3" stroke-linejoin="miter"/><line x1="668" y1="806" x2="668" y2="837" stroke="#ff0000" stroke-width="2.2"/><polyline points="659,816 668,837 677,816" fill="none" stroke="#ff0000" stroke-width="2.3" stroke-linejoin="miter"/><line x1="108" y1="921" x2="108" y2="896" stroke="#00ff00" stroke-width="2.2"/><polyline points="99,917 108,896 117,917" fill="none" stroke="#00ff00" stroke-width="2.3" stroke-linejoin="miter"/><line x1="647" y1="921" x2="647" y2="894" stroke="#00ff00" stroke-width="2.2"/><polyline points="638,915 647,894 656,915" fill="none" stroke="#00ff00" stroke-width="2.3" stroke-linejoin="miter"/><line x1="717" y1="921" x2="717" y2="903" stroke="#00ff00" stroke-width="2.2"/><polyline points="708,924 717,903 726,924" fill="none" stroke="#00ff00" stroke-width="2.3" stroke-linejoin="miter"/></g>
</svg></body></html>
